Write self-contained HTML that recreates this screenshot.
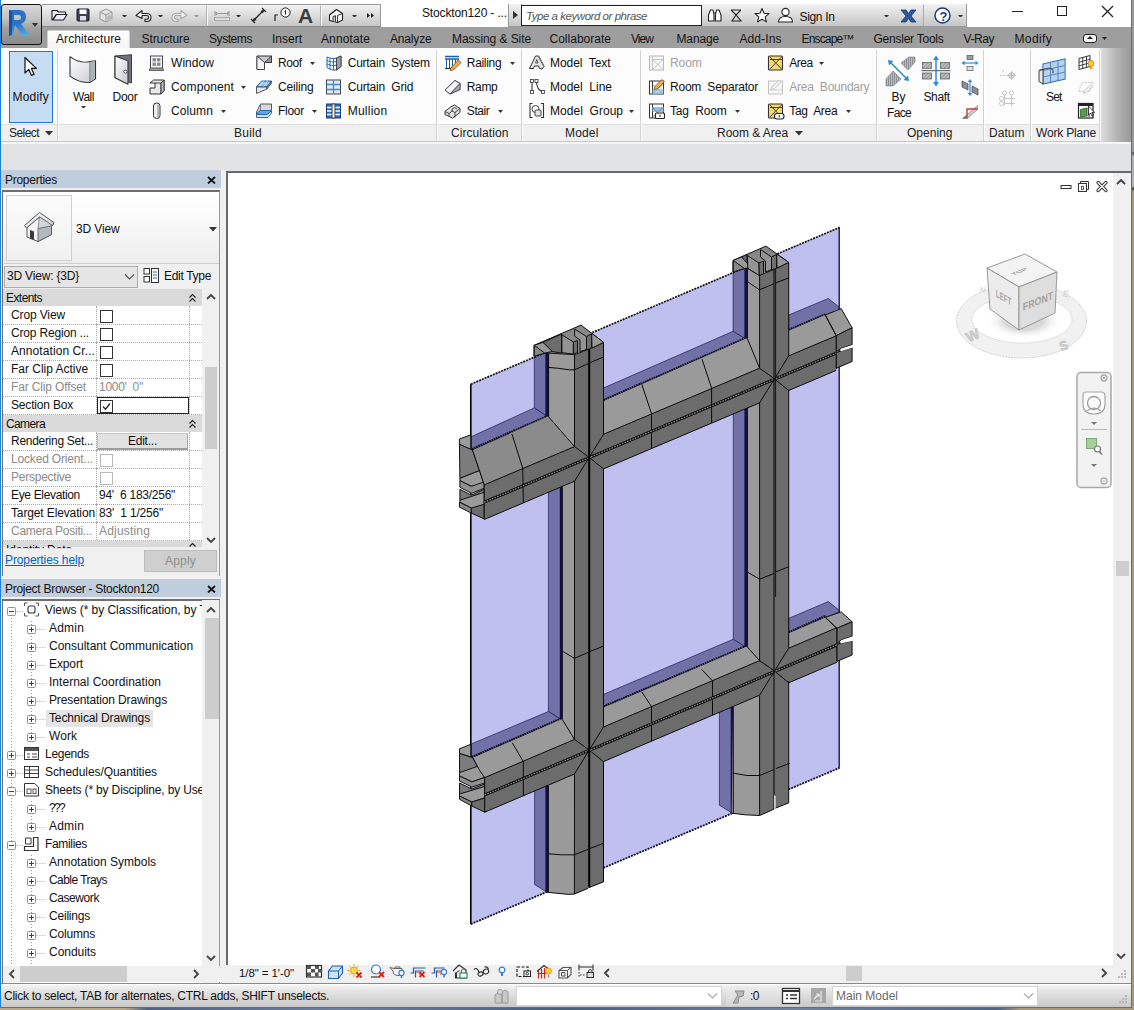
<!DOCTYPE html>
<html><head><meta charset="utf-8"><title>Stockton120</title>
<style>
html,body{margin:0;padding:0}
body{width:1134px;height:1010px;overflow:hidden;position:relative;background:#a6987c;font-family:"Liberation Sans",sans-serif;font-size:12px;color:#111}
#win{position:absolute;left:0;top:0;width:1132px;height:1008px;box-sizing:border-box;border:1px solid #1a82d8;border-top:none;background:#fff;overflow:hidden}
#in{position:absolute;left:-1px;top:0;width:1134px;height:1010px}
.t{position:absolute;white-space:pre;font-size:12px;line-height:14px;color:#111}
</style></head><body>
<div style="position:absolute;left:0;top:1008px;width:1134px;height:2px;background:linear-gradient(90deg,#b5a88a 0,#b5a88a 11%,#50627f 13%,#6d7f99 30%,#4a5d7c 50%,#71829b 70%,#506380 88%,#a6987c 90%)"></div>
<div style="position:absolute;left:1132px;top:0;width:2px;height:1008px;background:linear-gradient(#9a9a9a 0,#9a9a9a 15%,#555 15.2%,#b0b0b0 15.500%,#b0b0b0 18.500%,#444 18.700%,#a6987c 19%)"></div>
<div id="win"><div id="in">
<div style="position:absolute;left:1px;top:0px;width:1130px;height:27px;background:#fff"></div>
<div style="position:absolute;left:1px;top:4px;width:41px;height:41px;background:linear-gradient(#d8d8d8,#c2c2c2 35%,#a0a0a0 60%,#8a8a8a);border:1.5px solid #111;border-radius:3px;box-sizing:border-box;z-index:5"></div>
<svg style="position:absolute;left:8px;top:9px;z-index:6" width="24" height="28" viewBox="0 0 24 28"><defs><linearGradient id="rg" x1="0" y1="0" x2="0" y2="1"><stop offset="0" stop-color="#2a72c8"/><stop offset="0.55" stop-color="#2a72c8"/><stop offset="1" stop-color="#52b4e6"/></linearGradient></defs>
<path d="M1 1 H11 Q18 1 18 8 Q18 13 13 15 L22 27 H14 L7 16 L5 27 H1 Z M6 6 V11 H11 Q13 11 13 8.5 Q13 6 11 6 Z" fill="url(#rg)" fill-rule="evenodd"/><path d="M1 1 L4 3 L4 26 L1 27Z" fill="#1d4f9a"/></svg>
<div style="position:absolute;z-index:6;left:32px;top:23px;width:0;height:0;border-left:3.5px solid transparent;border-right:3.5px solid transparent;border-top:4.5px solid #2b3340"></div>
<div style="position:absolute;left:42px;top:4px;width:339px;height:23px;background:linear-gradient(#f2f2f2,#dcdcdc 50%,#c6c6c6);border-top:1px solid #9a9a9a;border-right:1px solid #9a9a9a;border-bottom:1px solid #8a8a8a;box-sizing:border-box"></div>
<svg style="position:absolute;left:0px;top:0px;z-index:4" width="400" height="28" viewBox="0 0 400 28"><path d="M52 10.5h5l1.5 1.5h7v2.5h-9l-3.5 5.5h-1z M52.5 20l3.5-5.5h11l-3.5 5.5z" fill="#eef" stroke="#222" stroke-width="1.1" stroke-linejoin="round"/><rect x="77" y="9" width="12" height="12" rx="1" fill="#3a4250" stroke="#1a2028" stroke-width="1"/><rect x="79.5" y="9.5" width="7" height="4.5" fill="#fff"/><rect x="80" y="16" width="6" height="4.5" fill="#dde"/><path d="M100 12l6-3 6 3v7l-6 3-6-3z M100 12l6 3 6-3 M106 15v7" fill="#e4e4e4" stroke="#9a9a9a" stroke-width="1"/><circle cx="110" cy="18" r="3" fill="#bbb"/><path d="M136 15.5l6-5v3h4.5c3 0 4.5 1.8 4.5 4s-1.500 4-4.500 4h-1.500v-2.200h1.500c1.500 0 2.200-.8 2.200-1.900s-.7-1.900-2.200-1.900h-4.500v3z" fill="#fff" stroke="#222" stroke-width="1.1" stroke-linejoin="round"/><path d="M187 15.5l-6-5v3h-4.500c-3 0-4.500 1.800-4.500 4s1.500 4 4.500 4h1.500v-2.200h-1.500c-1.500 0-2.200-.8-2.200-1.900s.7-1.900 2.200-1.900h4.500v3z" fill="#f4f4f4" stroke="#a8a8a8" stroke-width="1.1" stroke-linejoin="round"/><path d="M206.500 6v19" stroke="#b0b0b0"/><path d="M207.500 6v19" stroke="#fafafa"/><path d="M215 13.500h14 M215 11v5 M229 11v5 M217 12l-2 1.500 2 1.500 M227 12l2 1.500-2 1.500" fill="none" stroke="#999" stroke-width="1"/><rect x="214.500" y="17.500" width="15" height="3" fill="#ddd" stroke="#aaa"/><path d="M253 21l11-11 M251 19l4 4 M262 8l4 4 M255 19.500l-1.700 1.200 M262 11.500l2-1.500" fill="none" stroke="#222" stroke-width="1.300"/><path d="M253 21l1-3.500 2.500 2.500z M264 10l-1 3.500-2.500-2.500z" fill="#222"/><path d="M275 21v-6h3" fill="none" stroke="#222" stroke-width="1.200"/><path d="M281 10.500l3-2.500h3l3 2.500v4l-3 2.500h-3l-3-2.500z" fill="#fff" stroke="#222" stroke-width="1"/><path d="M285.500 10.500v4 M284.500 11.500l1-1" stroke="#222" stroke-width="1" fill="none"/><path d="M320.500 6v19" stroke="#b0b0b0"/><path d="M321.500 6v19" stroke="#fafafa"/><g transform="translate(-6.500 0)"><path d="M336 15l7-5.500 6 4v6.500l-5 2.500-8-2z" fill="#f6f6f6" stroke="#222" stroke-width="1.100" stroke-linejoin="round"/><path d="M339.500 21v-4.500l2.500-.8v6" fill="#ccc" stroke="#222" stroke-width=".9"/><path d="M343 9.500l-7 5.500 M344 22.500v-7l5-2" fill="none" stroke="#222" stroke-width=".9"/></g></svg>
<span class="t" style="left:298.0px;top:4.0px;color:#3c3c3c;font-size:21px;line-height:23px;font-weight:bold;z-index:4">A</span>
<svg style="position:absolute;left:121.5px;top:14.5625px;z-index:6" width="5" height="2.875" viewBox="0 0 5 2.875"><path d="M0 0h5l-2.5 2.875z" fill="#333"/></svg>
<svg style="position:absolute;left:157.5px;top:14.5625px;z-index:6" width="5" height="2.875" viewBox="0 0 5 2.875"><path d="M0 0h5l-2.5 2.875z" fill="#333"/></svg>
<svg style="position:absolute;left:193.5px;top:14.5625px;z-index:6" width="5" height="2.875" viewBox="0 0 5 2.875"><path d="M0 0h5l-2.5 2.875z" fill="#999"/></svg>
<svg style="position:absolute;left:235.5px;top:14.5625px;z-index:6" width="5" height="2.875" viewBox="0 0 5 2.875"><path d="M0 0h5l-2.5 2.875z" fill="#333"/></svg>
<svg style="position:absolute;left:352px;top:14.5625px;z-index:6" width="5" height="2.875" viewBox="0 0 5 2.875"><path d="M0 0h5l-2.5 2.875z" fill="#333"/></svg>
<svg style="position:absolute;left:366px;top:12px;z-index:4" width="10" height="8" viewBox="0 0 10 8"><path d="M1 1l3 2.500-3 2.500z M5 1l3 2.500-3 2.500z" fill="#222"/></svg>
<span class="t" style="left:422.0px;top:5.8px;letter-spacing:-0.14px;color:#111;">Stockton120 - ...</span>
<div style="position:absolute;left:508px;top:4px;width:459px;height:23px;background:linear-gradient(#f2f2f2,#dcdcdc 50%,#c6c6c6);border:1px solid #9a9a9a;border-top:none;box-sizing:border-box"></div>
<div style="position:absolute;left:508px;top:4px;width:14px;height:23px;border-right:1px solid #888;box-sizing:border-box"></div>
<div style="position:absolute;left:513px;top:11px;width:0;height:0;border-top:4px solid transparent;border-bottom:4px solid transparent;border-left:5px solid #333"></div>
<div style="position:absolute;left:521px;top:5px;width:181px;height:21px;background:#fff;border:1.500px solid #222;box-sizing:border-box"></div>
<span class="t" style="left:526.0px;top:9.6px;letter-spacing:-0.46px;color:#555;font-size:11.5px;line-height:13.5px;font-style:italic;">Type a keyword or phrase</span>
<svg style="position:absolute;left:0px;top:0px;z-index:4" width="1000" height="28" viewBox="0 0 1000 28"><path d="M708.500 21v-6l2-5h2.500l1 5v6z M715.500 21v-6l1-5h2.500l2 5v6z M713 13h3" fill="#fff" stroke="#222" stroke-width="1.100" stroke-linejoin="round"/><path d="M731 10l5 5 5-5 M731 10h10 M736 15l-4 6h9z" fill="none" stroke="#222" stroke-width="1.100"/><path d="M762 8.500l2 4.700 5 .4-3.800 3.300 1.200 5-4.400-2.700-4.400 2.700 1.200-5-3.800-3.300 5-.4z" fill="#fff" stroke="#222" stroke-width="1.100" stroke-linejoin="round"/><circle cx="785.500" cy="12" r="3.600" fill="#fff" stroke="#222" stroke-width="1.100"/><path d="M778.500 22c0-4 3-5.500 7-5.500s7 1.500 7 5.500z" fill="#fff" stroke="#222" stroke-width="1.100"/><path d="M901 10h5l2.500 3.500 2.500-3.500h5l-5 6 5 6h-5l-2.500-3.500-2.500 3.500h-5l5-6z" fill="#2a5a9a" stroke="#173a6a" stroke-width=".8"/><circle cx="942.500" cy="15.500" r="7.500" fill="#fff" stroke="#1a3a8a" stroke-width="1.500"/></svg>
<span class="t" style="left:939.5px;top:8.7px;color:#1a3a8a;font-size:13px;line-height:15px;font-weight:bold;z-index:5">?</span>
<span class="t" style="left:799.5px;top:9.8px;letter-spacing:-0.33px;color:#111;">Sign In</span>
<svg style="position:absolute;left:884px;top:14.5625px;z-index:6" width="5" height="2.875" viewBox="0 0 5 2.875"><path d="M0 0h5l-2.5 2.875z" fill="#333"/></svg>
<svg style="position:absolute;left:957.5px;top:14.5625px;z-index:6" width="5" height="2.875" viewBox="0 0 5 2.875"><path d="M0 0h5l-2.5 2.875z" fill="#333"/></svg>
<div style="position:absolute;left:923px;top:5px;width:1px;height:21px;background:#aaa"></div>
<div style="position:absolute;left:1012px;top:11px;width:11px;height:1.3px;background:#222"></div>
<div style="position:absolute;left:1056.5px;top:6px;width:10px;height:10px;border:1.300px solid #222;box-sizing:border-box"></div>
<svg style="position:absolute;left:1101px;top:5px;" width="13" height="13" viewBox="0 0 13 13"><path d="M1 1l11 11M12 1L1 12" stroke="#222" stroke-width="1.300"/></svg>
<div style="position:absolute;left:1px;top:27px;width:1130px;height:21px;background:#9e9e9e"></div>
<div style="position:absolute;left:47px;top:30px;width:83px;height:19px;background:linear-gradient(#fff,#f4f4f4);border:1px solid #d0d0d0;border-bottom:none;border-radius:2px 2px 0 0;box-sizing:border-box"></div>
<span class="t" style="left:56.0px;top:31.8px;letter-spacing:0.08px;color:#141414;">Architecture</span>
<span class="t" style="left:141.5px;top:31.8px;letter-spacing:-0.07px;color:#141414;">Structure</span>
<span class="t" style="left:209.0px;top:31.8px;letter-spacing:-0.43px;color:#141414;">Systems</span>
<span class="t" style="left:272.0px;top:31.8px;letter-spacing:0.00px;color:#141414;">Insert</span>
<span class="t" style="left:321.0px;top:31.8px;letter-spacing:0.12px;color:#141414;">Annotate</span>
<span class="t" style="left:390.0px;top:31.8px;letter-spacing:-0.17px;color:#141414;">Analyze</span>
<span class="t" style="left:452.0px;top:31.8px;letter-spacing:-0.07px;color:#141414;">Massing &amp; Site</span>
<span class="t" style="left:549.5px;top:31.8px;letter-spacing:0.01px;color:#141414;">Collaborate</span>
<span class="t" style="left:631.0px;top:31.8px;letter-spacing:-0.95px;color:#141414;">View</span>
<span class="t" style="left:676.5px;top:31.8px;letter-spacing:-0.14px;color:#141414;">Manage</span>
<span class="t" style="left:739.5px;top:31.8px;letter-spacing:0.09px;color:#141414;">Add-Ins</span>
<span class="t" style="left:801.5px;top:31.8px;letter-spacing:-0.84px;color:#141414;">Enscape™</span>
<span class="t" style="left:873.5px;top:31.8px;letter-spacing:-0.24px;color:#141414;">Gensler Tools</span>
<span class="t" style="left:963.5px;top:31.8px;letter-spacing:-0.44px;color:#141414;">V-Ray</span>
<span class="t" style="left:1014.5px;top:31.8px;letter-spacing:0.36px;color:#141414;">Modify</span>
<div style="position:absolute;left:1082.5px;top:33.5px;width:14px;height:9px;background:#f4f4f4;border:1px solid #222;border-radius:3px;box-sizing:border-box"></div>
<div style="position:absolute;left:1086.500px;top:36px;width:0;height:0;border-left:3px solid transparent;border-right:3px solid transparent;border-bottom:3.500px solid #222"></div>
<svg style="position:absolute;left:1102px;top:37.0625px;z-index:6" width="5" height="2.875" viewBox="0 0 5 2.875"><path d="M0 0h5l-2.5 2.875z" fill="#222"/></svg>
<div style="position:absolute;left:1px;top:48px;width:1130px;height:76px;background:#fcfcfc"></div>
<div style="position:absolute;left:1px;top:124px;width:1099px;height:17px;background:#f0f0f0;border-top:1px solid #dedede;box-sizing:border-box"></div>
<div style="position:absolute;left:1100px;top:48px;width:31px;height:94px;background:linear-gradient(90deg,#dedede,#b4b4b4 55%,#9c9c9c 95%)"></div>
<div style="position:absolute;left:1px;top:141px;width:1099px;height:1px;background:#c8c8c8"></div>
<div style="position:absolute;left:1px;top:142px;width:1130px;height:1.5px;background:#f6f6f6"></div>
<div style="position:absolute;left:1px;top:143.5px;width:1130px;height:27px;background:#e2e3e5"></div>
<div style="position:absolute;left:56.5px;top:50px;width:1px;height:91px;background:#d2d2d2"></div>
<div style="position:absolute;left:57.5px;top:50px;width:1px;height:91px;background:#fff"></div>
<div style="position:absolute;left:436px;top:50px;width:1px;height:91px;background:#d2d2d2"></div>
<div style="position:absolute;left:437px;top:50px;width:1px;height:91px;background:#fff"></div>
<div style="position:absolute;left:520.5px;top:50px;width:1px;height:91px;background:#d2d2d2"></div>
<div style="position:absolute;left:521.5px;top:50px;width:1px;height:91px;background:#fff"></div>
<div style="position:absolute;left:640px;top:50px;width:1px;height:91px;background:#d2d2d2"></div>
<div style="position:absolute;left:641px;top:50px;width:1px;height:91px;background:#fff"></div>
<div style="position:absolute;left:876px;top:50px;width:1px;height:91px;background:#d2d2d2"></div>
<div style="position:absolute;left:877px;top:50px;width:1px;height:91px;background:#fff"></div>
<div style="position:absolute;left:982.5px;top:50px;width:1px;height:91px;background:#d2d2d2"></div>
<div style="position:absolute;left:983.5px;top:50px;width:1px;height:91px;background:#fff"></div>
<div style="position:absolute;left:1029.5px;top:50px;width:1px;height:91px;background:#d2d2d2"></div>
<div style="position:absolute;left:1030.5px;top:50px;width:1px;height:91px;background:#fff"></div>
<div style="position:absolute;left:1098.5px;top:50px;width:1px;height:91px;background:#d2d2d2"></div>
<div style="position:absolute;left:1099.5px;top:50px;width:1px;height:91px;background:#fff"></div>
<div style="position:absolute;left:9px;top:50.5px;width:44px;height:72px;background:#c6dcf3;border:1.500px solid #1c78d2;box-sizing:border-box"></div>
<svg style="position:absolute;left:22px;top:56px;" width="16" height="22" viewBox="0 0 16 22"><path d="M3 1.500v15.500l3.800-3.600 2.700 6 2.600-1.200-2.700-5.800h5z" fill="#fff" stroke="#111" stroke-width="1.200" stroke-linejoin="round"/></svg>
<span class="t" style="left:12.5px;top:89.8px;letter-spacing:0.19px;color:#111;">Modify</span>
<svg style="position:absolute;left:67px;top:53.5px;" width="32" height="32" viewBox="0 0 32 36" preserveAspectRatio="none"><defs><linearGradient id="wg" x1="0" y1="0" x2="1" y2="1"><stop offset="0" stop-color="#fff"/><stop offset="1" stop-color="#c9ccd3"/></linearGradient></defs><path d="M3 3 C10 9 17 10 23 8.500 L28.500 7.500 V28 L23 32 C15 33 9 30 3 25 Z" fill="url(#wg)" stroke="#333" stroke-width="1.100" stroke-linejoin="round"/><path d="M23 8.500V32" stroke="#555" stroke-width="1" fill="none"/><path d="M23.500 9L28 8v19.500l-4.500 3.500z" fill="#aeb2bb"/></svg>
<span class="t" style="left:73.0px;top:89.8px;letter-spacing:-0.48px;color:#111;">Wall</span>
<svg style="position:absolute;left:80.5px;top:105.562px;z-index:6" width="5" height="2.875" viewBox="0 0 5 2.875"><path d="M0 0h5l-2.5 2.875z" fill="#333"/></svg>
<svg style="position:absolute;left:112px;top:52.5px;" width="24" height="33" viewBox="0 0 24 38" preserveAspectRatio="none"><defs><linearGradient id="dg" x1="0" y1="0" x2="1" y2="1"><stop offset="0" stop-color="#fff"/><stop offset="1" stop-color="#c4c7cf"/></linearGradient></defs><path d="M3 3.500L19.500 2V34.500L3 28.500Z" fill="#6f737d" stroke="#333" stroke-width="1"/><path d="M3 3.500L16 9V36L3 28.500Z" fill="url(#dg)" stroke="#333" stroke-width="1.100" stroke-linejoin="round"/><circle cx="13.500" cy="21.500" r="1.700" fill="#fff" stroke="#333" stroke-width=".9"/></svg>
<span class="t" style="left:112.5px;top:89.8px;letter-spacing:-0.25px;color:#111;">Door</span>
<span class="t" style="left:171.0px;top:56.1px;letter-spacing:0.05px;color:#111;">Window</span>
<span class="t" style="left:171.0px;top:80.1px;letter-spacing:0.11px;color:#111;">Component</span>
<svg style="position:absolute;left:241.2px;top:85.8625px;z-index:6" width="5" height="2.875" viewBox="0 0 5 2.875"><path d="M0 0h5l-2.5 2.875z" fill="#333"/></svg>
<span class="t" style="left:171.0px;top:103.9px;letter-spacing:0.11px;color:#111;">Column</span>
<svg style="position:absolute;left:220.5px;top:109.662px;z-index:6" width="5" height="2.875" viewBox="0 0 5 2.875"><path d="M0 0h5l-2.5 2.875z" fill="#333"/></svg>
<span class="t" style="left:278.0px;top:56.1px;letter-spacing:-0.46px;color:#111;">Roof</span>
<svg style="position:absolute;left:309.5px;top:61.8625px;z-index:6" width="5" height="2.875" viewBox="0 0 5 2.875"><path d="M0 0h5l-2.5 2.875z" fill="#333"/></svg>
<span class="t" style="left:278.0px;top:80.1px;letter-spacing:-0.16px;color:#111;">Ceiling</span>
<span class="t" style="left:278.0px;top:103.9px;letter-spacing:-0.27px;color:#111;">Floor</span>
<svg style="position:absolute;left:311.5px;top:109.662px;z-index:6" width="5" height="2.875" viewBox="0 0 5 2.875"><path d="M0 0h5l-2.5 2.875z" fill="#333"/></svg>
<span class="t" style="left:347.7px;top:56.1px;letter-spacing:-0.22px;color:#111;">Curtain  System</span>
<span class="t" style="left:347.7px;top:80.1px;letter-spacing:-0.19px;color:#111;">Curtain  Grid</span>
<span class="t" style="left:347.7px;top:103.9px;letter-spacing:0.24px;color:#111;">Mullion</span>
<span class="t" style="left:466.8px;top:56.1px;letter-spacing:-0.31px;color:#111;">Railing</span>
<svg style="position:absolute;left:510px;top:61.8625px;z-index:6" width="5" height="2.875" viewBox="0 0 5 2.875"><path d="M0 0h5l-2.5 2.875z" fill="#333"/></svg>
<span class="t" style="left:466.8px;top:80.1px;letter-spacing:-0.38px;color:#111;">Ramp</span>
<span class="t" style="left:466.8px;top:103.9px;letter-spacing:-0.41px;color:#111;">Stair</span>
<svg style="position:absolute;left:497.5px;top:109.662px;z-index:6" width="5" height="2.875" viewBox="0 0 5 2.875"><path d="M0 0h5l-2.5 2.875z" fill="#333"/></svg>
<span class="t" style="left:550.0px;top:56.1px;letter-spacing:-0.05px;color:#111;">Model  Text</span>
<span class="t" style="left:550.0px;top:80.1px;letter-spacing:-0.00px;color:#111;">Model  Line</span>
<span class="t" style="left:550.0px;top:103.9px;letter-spacing:0.03px;color:#111;">Model  Group</span>
<svg style="position:absolute;left:628.5px;top:109.662px;z-index:6" width="5" height="2.875" viewBox="0 0 5 2.875"><path d="M0 0h5l-2.5 2.875z" fill="#333"/></svg>
<span class="t" style="left:670.0px;top:56.1px;letter-spacing:-0.08px;color:#a0a0a0;">Room</span>
<span class="t" style="left:670.0px;top:80.1px;letter-spacing:-0.22px;color:#111;">Room  Separator</span>
<span class="t" style="left:670.0px;top:103.9px;letter-spacing:-0.17px;color:#111;">Tag  Room</span>
<svg style="position:absolute;left:735.2px;top:109.662px;z-index:6" width="5" height="2.875" viewBox="0 0 5 2.875"><path d="M0 0h5l-2.5 2.875z" fill="#333"/></svg>
<span class="t" style="left:789.3px;top:56.1px;letter-spacing:-0.51px;color:#111;">Area</span>
<svg style="position:absolute;left:819.2px;top:61.8625px;z-index:6" width="5" height="2.875" viewBox="0 0 5 2.875"><path d="M0 0h5l-2.5 2.875z" fill="#333"/></svg>
<span class="t" style="left:789.3px;top:80.1px;letter-spacing:-0.24px;color:#a0a0a0;">Area  Boundary</span>
<span class="t" style="left:789.3px;top:103.9px;letter-spacing:-0.30px;color:#111;">Tag  Area</span>
<svg style="position:absolute;left:846px;top:109.662px;z-index:6" width="5" height="2.875" viewBox="0 0 5 2.875"><path d="M0 0h5l-2.5 2.875z" fill="#333"/></svg>
<span class="t" style="left:891.5px;top:89.8px;letter-spacing:0.00px;color:#111;">By</span>
<span class="t" style="left:887.0px;top:105.8px;letter-spacing:-0.67px;color:#111;">Face</span>
<span class="t" style="left:923.4px;top:89.8px;letter-spacing:-0.34px;color:#111;">Shaft</span>
<span class="t" style="left:1046.0px;top:89.8px;letter-spacing:-0.83px;color:#111;">Set</span>
<span class="t" style="left:9.0px;top:126.1px;letter-spacing:-0.56px;color:#222;">Select</span>
<span class="t" style="left:234.0px;top:126.1px;letter-spacing:0.26px;color:#222;">Build</span>
<span class="t" style="left:451.0px;top:126.1px;letter-spacing:0.07px;color:#222;">Circulation</span>
<span class="t" style="left:565.0px;top:126.1px;letter-spacing:0.16px;color:#222;">Model</span>
<span class="t" style="left:717.0px;top:126.1px;letter-spacing:-0.03px;color:#222;">Room &amp; Area</span>
<span class="t" style="left:907.0px;top:126.1px;letter-spacing:0.02px;color:#222;">Opening</span>
<span class="t" style="left:989.0px;top:126.1px;letter-spacing:0.03px;color:#222;">Datum</span>
<span class="t" style="left:1036.0px;top:126.1px;letter-spacing:-0.18px;color:#222;">Work Plane</span>
<svg style="position:absolute;left:45px;top:131px;z-index:6" width="8" height="4.6" viewBox="0 0 8 4.6"><path d="M0 0h8l-4 4.6z" fill="#333"/></svg>
<svg style="position:absolute;left:794.5px;top:131px;z-index:6" width="8" height="4.6" viewBox="0 0 8 4.6"><path d="M0 0h8l-4 4.6z" fill="#333"/></svg>
<svg style="position:absolute;left:0;top:0" width="1134" height="150" viewBox="0 0 1134 150"><g transform="translate(149 55.5)"><rect x="1.500" y="0.500" width="12" height="12" fill="#fff" stroke="#444"/><rect x="3.500" y="2.500" width="3.500" height="3.500" fill="#8a8d94"/><rect x="8" y="2.500" width="3.500" height="3.500" fill="#8a8d94"/><rect x="3.500" y="7" width="3.500" height="3.500" fill="#8a8d94"/><rect x="8" y="7" width="3.500" height="3.500" fill="#8a8d94"/><rect x="0.500" y="13.500" width="14" height="1.500" fill="#ddd" stroke="#444" stroke-width=".8"/></g><g transform="translate(148.5 78.5)"><path d="M1.500 4.500L5 1.500h10.500v10.500l-3 3.500H1.500V9.500h5v-5z" fill="#e8e8ea" stroke="#333" stroke-linejoin="round"/><path d="M6.500 4.500h6v11M12.500 4.500l3-3M6.500 9.500h0" fill="none" stroke="#333" stroke-width=".9"/><path d="M12.500 4.500l3-3v10.500l-3 3.500z" fill="#b8bac0" stroke="#333" stroke-width=".9"/></g><g transform="translate(152.5 102.5)"><rect x="1" y="0.500" width="6.500" height="15.500" rx="3" fill="#f0f0f2" stroke="#333"/><path d="M5.500 2v12.500" stroke="#aaa" stroke-width="1.500"/></g><g transform="translate(256.5 55.5)"><path d="M0.500 0.500h14.500v6.500h-7v7h-7.500z" fill="#c9cbd0" stroke="#333" stroke-linejoin="round"/><path d="M0.500 0.500l7.500 6.500M8 7h7M8 7v7" fill="none" stroke="#555" stroke-width=".9"/><path d="M0.500 0.500l7.500 6.500v7h-7.500z" fill="#f4f4f6" stroke="#333" stroke-width=".8"/><path d="M8 7h7V0.500z" fill="#8f9299" stroke="#333" stroke-width=".8"/></g><g transform="translate(255.5 78.5)"><path d="M1 8.500L6 2.500h10l-4.500 6z" fill="#5fa5ea" stroke="#1b5fae" stroke-width=".9"/><path d="M3 6.500h10M4.500 4.500h10M8 2.500l-4 6M12 2.500l-4 6" stroke="#dff" stroke-width=".7"/><path d="M1 8.500v6.500l10.500-4.500v-2z" fill="#e4e4e6" stroke="#444" stroke-width=".9"/><path d="M11.500 8.500L16 2.500v2l-4.500 6z" fill="#999" stroke="#444" stroke-width=".8"/></g><g transform="translate(255.5 102.5)"><path d="M1 9.500L5 1.500h11v6.500l-4 6h-11z" fill="#d8d9dc" stroke="#444" stroke-width=".9" stroke-linejoin="round"/><path d="M5 1.500v6L1 13" fill="none" stroke="#666" stroke-width=".8"/><path d="M1 11.500L4.500 8h11.500l-4 4.500z" fill="#5fa5ea" stroke="#1b5fae" stroke-width=".9"/><path d="M1 12v3h11.500l3.500-4.500v-2.500l-4 4z" fill="#cfe3fa" stroke="#1b5fae" stroke-width=".9"/></g><g transform="translate(326 54.5)"><path d="M1 2.500C4 4 7 4.500 10.500 3.500L15 1.500v10.500l-4.500 3.500C7 16 4 15 1 13z" fill="#fff" stroke="#1b5fae" stroke-width="1"/><path d="M1 6c3 1.500 6 2 9.500 1l4.500-2M1 9.500c3 1.500 6 2 9.500 1l4.500-2M4 4v11M7.500 4.500v11M10.500 3.500v12" fill="none" stroke="#1b5fae" stroke-width=".9"/><path d="M10.500 3.500L15 1.500v10.500l-4.500 3.500z" fill="#9a9da4" stroke="#333" stroke-width=".8"/></g><g transform="translate(326 79.5)"><rect x="0.500" y="0.500" width="14" height="14" fill="#e8e8ec" stroke="#444"/><path d="M0.500 5h14M0.500 10h14M7.500 0.500v14" stroke="#3b8be0" stroke-width="1.300"/></g><g transform="translate(326 103.5)"><rect x="0.500" y="0.500" width="14" height="14" fill="#2d6fc4" stroke="#1a3f7a"/><path d="M1 4h5M9 4h5M1 7.500h5M9 7.500h5M1 11h5M9 11h5" stroke="#fff" stroke-width="1.300"/><rect x="6" y="0.500" width="3" height="14" fill="#e8e8ea" stroke="#333" stroke-width=".8"/></g><g transform="translate(444.5 55.5)"><path d="M0.500 1h14M0.500 3.500h14" stroke="#1b5fae" stroke-width="1.300"/><path d="M2 3.500v9M5 3.500v9M8 3.500v9M11 3.500v6M13.500 3.500v3" stroke="#1b5fae" stroke-width="1"/><path d="M0.500 13h7" stroke="#333" stroke-width="1.200"/><path d="M6 15l1-3.500 7-7 2.500 2.500-7 7z" fill="#f2b04a" stroke="#7a4a10" stroke-width=".8"/><path d="M6 15l1-3.500 2.500 2.500z" fill="#f7e0c0" stroke="#7a4a10" stroke-width=".6"/></g><g transform="translate(444.5 79.5)"><path d="M0.500 10.500L10.500 1l5 3v6l-10 4.500z" fill="#e6e6e8" stroke="#444" stroke-width=".9" stroke-linejoin="round"/><path d="M0.500 10.500l10-4.500 5-2M10.500 6v8" fill="none" stroke="#444" stroke-width=".0"/><path d="M0.500 10.500L10.500 1l5 3L5.500 14.500z" fill="#f6f6f8" stroke="#444" stroke-width=".9" stroke-linejoin="round"/><path d="M15.500 4v6l-10 4.500z" fill="#a6a8ae" stroke="#444" stroke-width=".8"/></g><g transform="translate(444.5 103.5)"><path d="M0.500 8L6 3.500l4-2 5.500 3.500v4L8 14.500 0.500 11z" fill="#e2e2e5" stroke="#333" stroke-width="1" stroke-linejoin="round"/><path d="M0.500 8l4 2 3-2.500 3 1.500 5-4M4.500 10v2.500M7.500 7.500V5.500l2.500-1.500 2.500 1.500M10.500 9v5" fill="none" stroke="#333" stroke-width=".9"/></g><g transform="translate(528.5 54.5)"><path d="M1 14L7 1.500h3L15.500 12l-2 2.500-2.500-.5-1-2.500H6L5 14z" fill="#e4e4e6" stroke="#333" stroke-width="1" stroke-linejoin="round"/><path d="M7 8.500h2.500L8.300 5z" fill="#fff" stroke="#333" stroke-width=".8"/><path d="M10 1.500L15.500 12" stroke="#777" stroke-width="1.500"/></g><g transform="translate(528.5 78.5)"><path d="M3.500 2.500v11" stroke="#333" stroke-width="1.100"/><path d="M8 2.500c0 7 2 10 7 11" fill="none" stroke="#333" stroke-width="1.100"/><rect x="2" y="1" width="3" height="3" fill="#fff" stroke="#333" stroke-width=".8"/><rect x="2" y="12" width="3" height="3" fill="#fff" stroke="#333" stroke-width=".8"/><rect x="6.500" y="1" width="3" height="3" fill="#fff" stroke="#333" stroke-width=".8"/><rect x="13" y="12" width="3" height="3" fill="#fff" stroke="#333" stroke-width=".8"/></g><g transform="translate(528.5 102.5)"><path d="M4 1H1.500v14H4M12.500 1H15v14h-2.500" fill="none" stroke="#333" stroke-width="1.100"/><circle cx="7" cy="6.500" r="3.500" fill="#fff" stroke="#333" stroke-width=".9"/><rect x="6.500" y="7.500" width="6" height="6" rx="1" fill="#e4e4e6" stroke="#333" stroke-width=".9"/></g><g transform="translate(649 55.5)"><rect x="0.500" y="0.500" width="14" height="14" fill="#f6f6f6" stroke="#b8b8b8"/><path d="M3.500 0.500v14M3.500 4l10.500 10M14 4L3.500 14M3.500 4h11" fill="none" stroke="#c0c0c0" stroke-width=".9"/></g><g transform="translate(649 79.5)"><rect x="0.500" y="1.500" width="14" height="13" fill="#fff" stroke="#333"/><path d="M3.500 1.500v13" stroke="#333"/><path d="M3.500 5l10.500 9M14 5L3.500 14" stroke="#777" stroke-width=".8"/><path d="M3.500 9.500h11v5h-11z" fill="#8ec0ee" opacity=".8"/><path d="M5 10l1-3 7-7 2.300 2.300-7 7z" fill="#f2b04a" stroke="#7a4a10" stroke-width=".8"/></g><g transform="translate(649 103.5)"><rect x="0.500" y="0.500" width="14" height="14" fill="#fff" stroke="#333"/><path d="M3.500 0.500v14" stroke="#333"/><path d="M3.500 3.500h11v5h-11z" fill="#8ec0ee"/><path d="M3.500 4l10.500 10M14 4L3.500 14" stroke="#777" stroke-width=".8"/><rect x="6.500" y="9.500" width="9" height="5.500" rx="1" fill="#fff" stroke="#222" stroke-width="1.100"/><path d="M11 11v2.500" stroke="#222"/></g><g transform="translate(768 55.5)"><rect x="0.500" y="0.500" width="14" height="14" rx="1" fill="#f3d872" stroke="#333" stroke-width="1.100"/><path d="M2 1.500l11.500 12M13.500 1.500L2 13.500M2 4h12" fill="none" stroke="#333" stroke-width=".9"/></g><g transform="translate(768 79.5)"><rect x="0.500" y="1.500" width="14" height="13" fill="#f6f6f6" stroke="#c4c4c4"/><path d="M0.500 10.500h14" stroke="#d0d0d0"/><path d="M3 10l1-3 7-6.500 2.300 2.300-7 6.500z" fill="#eee" stroke="#c0c0c0" stroke-width=".8"/></g><g transform="translate(768 103.5)"><rect x="0.500" y="0.500" width="14" height="14" rx="1" fill="#f3d872" stroke="#333" stroke-width="1.100"/><path d="M2 1.500l11.500 12M13.500 1.500L2 13.500M2 4h12" fill="none" stroke="#333" stroke-width=".9"/><rect x="6.500" y="10" width="9.500" height="5.500" rx="2.500" fill="#fff" stroke="#222" stroke-width="1.100"/><path d="M11.200 11.500v2.500" stroke="#222"/></g><g transform="translate(884 55)"><defs><pattern id="hv" width="2" height="2" patternUnits="userSpaceOnUse"><rect width="2" height="2" fill="#b9bbc0"/><rect width="1" height="2" fill="#8d9097"/></pattern></defs><path d="M17 8l8-6h6v5l-7 8z" fill="url(#hv)" stroke="#777" stroke-width=".6"/><path d="M2 24l7-8 8 8-8 7H2z" fill="url(#hv)" stroke="#777" stroke-width=".6"/><path d="M5 6l19 19" stroke="#2a8be6" stroke-width="1.600"/><path d="M4 5l5.500 1-4.500 4.500zM25 26l-5.500-1 4.500-4.500z" fill="#2a8be6"/></g><g transform="translate(921 55)"><defs><pattern id="hd" width="2.500" height="2.500" patternUnits="userSpaceOnUse" patternTransform="rotate(45)"><rect width="2.500" height="2.500" fill="#c9cbd0"/><rect width="1.200" height="2.500" fill="#8d9097"/></pattern></defs><rect x="1.500" y="7.500" width="9" height="6" fill="url(#hd)" stroke="#666" stroke-width=".8"/><rect x="19.500" y="7.500" width="9" height="6" fill="url(#hd)" stroke="#666" stroke-width=".8"/><rect x="1.500" y="18" width="9" height="6" fill="url(#hd)" stroke="#666" stroke-width=".8"/><rect x="19.500" y="18" width="9" height="6" fill="url(#hd)" stroke="#666" stroke-width=".8"/><path d="M0.500 15.700h29" stroke="#444" stroke-width="1"/><path d="M15 3v26" stroke="#2a8be6" stroke-width="1.500"/><path d="M15 0.500l3 4.500h-6zM15 31.500l3-4.500h-6z" fill="#2a8be6"/></g><g transform="translate(961.5 55)"><rect x="5.500" y="0.500" width="6" height="4" fill="#9a9da4" stroke="#555" stroke-width=".7"/><rect x="5.500" y="11.500" width="6" height="4" fill="#e0e0e2" stroke="#555" stroke-width=".7"/><path d="M2 8h13" stroke="#2a8be6" stroke-width="1.200"/><path d="M0 8l3-2.300v4.600zM17 8l-3-2.300v4.600z" fill="#2a8be6"/></g><g transform="translate(961.5 79)"><path d="M0.500 2l6 3v6l-6-3zM10.500 7l6 3v6l-6-3z" fill="#8d9097" stroke="#444" stroke-width=".7"/><path d="M8.500 2.500v12" stroke="#2a8be6" stroke-width="1.200"/><path d="M8.500 0l2.300 3h-4.600zM8.500 17l2.300-3h-4.600z" fill="#2a8be6"/></g><g transform="translate(961.5 103)"><path d="M1 15.500L16 2.500v4L6 15.500z" fill="#c9cbd0" stroke="#777" stroke-width=".6"/><path d="M5.500 15.500v-9.500h10.500" fill="none" stroke="#d03a2a" stroke-width="1.400"/><path d="M1 15.500l4.500-4v4z" fill="#777"/></g><g transform="translate(999 66)"><path d="M1 9.500h8" stroke="#c8c8c8" stroke-dasharray="2 1"/><circle cx="12.500" cy="9.500" r="3" fill="#d4d4d4" stroke="#c0c0c0"/><path d="M8 9.500h9M12.500 5v9" stroke="#c0c0c0" stroke-width=".9"/><path d="M4 3.500v3" stroke="#c8c8c8"/></g><g transform="translate(999 90)"><path d="M5.500 4v12M12.500 4v12M2 8.500h14M2 13.500h14" stroke="#c4c4c4" stroke-width="1"/><circle cx="5.500" cy="3" r="2" fill="#fff" stroke="#c4c4c4"/><circle cx="12.500" cy="3" r="2" fill="#fff" stroke="#c4c4c4"/><circle cx="2.500" cy="8.500" r="2" fill="#fff" stroke="#c4c4c4"/><circle cx="2.500" cy="13.500" r="2" fill="#fff" stroke="#c4c4c4"/></g><g transform="translate(1038 55)"><path d="M5 9l22-5v20L5 29z" fill="#9cc4e8" stroke="#1b5fae" stroke-width="1.100"/><path d="M5 15.500l22-5M5 22l22-5M12.500 7.300v20M20 5.600v20" stroke="#1b5fae" stroke-width="1"/><path d="M5 9l22-5v20L5 29z" fill="#fff" opacity=".25"/><path d="M1 15.500l4-1.500v15l-4-2.500z" fill="#e8e8ea" stroke="#333" stroke-width=".9"/><path d="M1 15.500l10-2.500 4 1.500v4" fill="none" stroke="#333" stroke-width=".9"/></g><g transform="translate(1077.5 54.5)"><path d="M1.500 4l11-3v11l-11 3z" fill="#fff" stroke="#333" stroke-width="1"/><path d="M1.500 7.700l11-3M1.500 11.300l11-3M5.200 3v11M9 2v11" stroke="#333" stroke-width=".9"/><circle cx="13.500" cy="9" r="3" fill="#ffc83a" stroke="#c98a10" stroke-width=".8"/><rect x="12.200" y="12" width="2.600" height="2.500" fill="#e8a020"/></g><g transform="translate(1077.5 79)"><path d="M1 12.500L5 3.500h11l-4 9z" fill="none" stroke="#c8c8c8" stroke-dasharray="2 1"/><path d="M6 14.500l1-3 6.500-6 2 2-6.500 6z" fill="#f0f0f0" stroke="#c0c0c0" stroke-width=".8"/></g><g transform="translate(1077.5 102.5)"><rect x="1" y="1" width="14.500" height="14.500" fill="#fff" stroke="#222" stroke-width="1.200"/><path d="M1 2.500h14.500" stroke="#222" stroke-width="2"/><path d="M3 7l6-1.500v8L3 14.500z" fill="#5d9a4e" stroke="#2f5f28" stroke-width=".8"/><path d="M9 5.500l3 1v7.500l-3-.5z" fill="#8dc47e" stroke="#2f5f28" stroke-width=".6"/><path d="M11 3.500v9l2-2 1.500 3 1.300-.6-1.500-3h2.700z" fill="#fff" stroke="#111" stroke-width=".8"/></g></svg>
<div style="position:absolute;left:1px;top:170px;width:224.5px;height:814px;background:#f0f0f0"></div>
<div style="position:absolute;left:1px;top:170px;width:220px;height:17.8px;background:#bfcddc"></div>
<span class="t" style="left:5.0px;top:173.3px;letter-spacing:-0.27px;color:#111;">Properties</span>
<svg style="position:absolute;left:206.5px;top:175.5px;" width="9" height="8" viewBox="0 0 9 8"><path d="M1 1l7 6.500M8 1L1 7.500" stroke="#111" stroke-width="1.800"/></svg>
<div style="position:absolute;left:2px;top:190px;width:218px;height:387px;background:#f0f0f0;border:1px solid #9a9a9a;border-top:2px solid #6e6e6e;border-left:1.500px solid #6e6e6e;border-bottom:none;box-sizing:border-box"></div>
<div style="position:absolute;left:3.5px;top:191.5px;width:215px;height:72px;background:linear-gradient(#fff,#fafafa 40%,#ececec);border-bottom:1px solid #d0d0d0;box-sizing:border-box"></div>
<div style="position:absolute;left:6px;top:195px;width:66px;height:66px;background:linear-gradient(#fbfbfb,#f1f1f1);border:1px solid #cfcfcf;box-sizing:border-box"></div>
<svg style="position:absolute;left:24px;top:212px;" width="31" height="31" viewBox="0 0 31 31"><defs><linearGradient id="hg" x1="0" y1="0" x2="1" y2="1"><stop offset="0" stop-color="#fff"/><stop offset="1" stop-color="#c8ccd4"/></linearGradient></defs><path d="M3 15L15 5.500l12.500 8v9L14 29.500 3 25z" fill="#f4f4f6" stroke="#555" stroke-width="1"/><path d="M14 16.500l13.500-3v9L14 29.500z" fill="#b4b8c0" stroke="#555" stroke-width=".8"/><path d="M6 18l4 1.500v8.500l-4-1.500z" fill="#3a3a3a"/><path d="M0.500 13.500L15.500 0.500 30 10.500l-1.500 3L15.500 5 2.500 16z" fill="url(#hg)" stroke="#555" stroke-width="1" stroke-linejoin="round"/><path d="M15.500 5L14 16.500l14.500-3z" fill="#d4d7dd" stroke="#666" stroke-width=".7"/></svg>
<span class="t" style="left:76.0px;top:222.3px;letter-spacing:-0.14px;color:#111;">3D View</span>
<svg style="position:absolute;left:209px;top:227px;" width="8" height="5" viewBox="0 0 8 5"><path d="M0 0h8l-4 4.500z" fill="#333"/></svg>
<div style="position:absolute;left:3.5px;top:265.5px;width:134px;height:22px;background:#e5e5e5;border:1px solid #adadad;box-sizing:border-box"></div>
<span class="t" style="left:7.0px;top:269.3px;letter-spacing:-0.19px;color:#111;">3D View: {3D}</span>
<svg style="position:absolute;left:123.5px;top:273px;" width="11" height="8" viewBox="0 0 11 8"><path d="M1 1.500l4.500 4.500L10 1.500" fill="none" stroke="#555" stroke-width="1.100"/></svg>
<svg style="position:absolute;left:143px;top:267px;" width="17" height="17" viewBox="0 0 17 17"><rect x="1" y="1.500" width="5.500" height="5.500" fill="#fff" stroke="#333"/><rect x="1" y="9.500" width="5.500" height="5.500" fill="#fff" stroke="#333"/><rect x="8.500" y="1.500" width="7" height="14" fill="#fff" stroke="#333"/><path d="M10 5h4M10 8h4M10 11h4" stroke="#36a" stroke-width="1"/></svg>
<span class="t" style="left:164.0px;top:268.8px;letter-spacing:-0.31px;color:#111;">Edit Type</span>
<div style="position:absolute;left:3px;top:289px;width:199px;height:257px;background:#fff;overflow:hidden"></div>
<div style="position:absolute;left:3px;top:289px;width:199px;height:17px;background:#dadada"></div>
<span class="t" style="left:6.0px;top:291.3px;letter-spacing:-0.57px;color:#111;">Extents</span>
<svg style="position:absolute;left:188px;top:293px;" width="9" height="10" viewBox="0 0 9 10"><path d="M1.500 4.500l3-3 3 3M1.500 8.500l3-3 3 3" fill="none" stroke="#222" stroke-width="1.200"/></svg>
<span class="t" style="left:11.0px;top:308.0px;letter-spacing:-0.13px;color:#111;">Crop View</span>
<div style="position:absolute;left:3px;top:323.5px;width:199px;height:0px;border-top:1px dotted #a8a8a8"></div>
<div style="position:absolute;left:96px;top:306px;width:0px;height:18px;border-left:1px dotted #a8a8a8"></div>
<div style="position:absolute;left:188.5px;top:306px;width:0px;height:18px;border-left:1px dotted #a8a8a8"></div>
<span class="t" style="left:11.0px;top:326.0px;letter-spacing:-0.18px;color:#111;">Crop Region ...</span>
<div style="position:absolute;left:3px;top:341.5px;width:199px;height:0px;border-top:1px dotted #a8a8a8"></div>
<div style="position:absolute;left:96px;top:324px;width:0px;height:18px;border-left:1px dotted #a8a8a8"></div>
<div style="position:absolute;left:188.5px;top:324px;width:0px;height:18px;border-left:1px dotted #a8a8a8"></div>
<span class="t" style="left:11.0px;top:344.0px;letter-spacing:0.08px;color:#111;">Annotation Cr...</span>
<div style="position:absolute;left:3px;top:359.5px;width:199px;height:0px;border-top:1px dotted #a8a8a8"></div>
<div style="position:absolute;left:96px;top:342px;width:0px;height:18px;border-left:1px dotted #a8a8a8"></div>
<div style="position:absolute;left:188.5px;top:342px;width:0px;height:18px;border-left:1px dotted #a8a8a8"></div>
<span class="t" style="left:11.0px;top:362.0px;letter-spacing:-0.02px;color:#111;">Far Clip Active</span>
<div style="position:absolute;left:3px;top:377.5px;width:199px;height:0px;border-top:1px dotted #a8a8a8"></div>
<div style="position:absolute;left:96px;top:360px;width:0px;height:18px;border-left:1px dotted #a8a8a8"></div>
<div style="position:absolute;left:188.5px;top:360px;width:0px;height:18px;border-left:1px dotted #a8a8a8"></div>
<span class="t" style="left:11.0px;top:380.0px;letter-spacing:-0.14px;color:#8a8a8a;">Far Clip Offset</span>
<div style="position:absolute;left:3px;top:395.5px;width:199px;height:0px;border-top:1px dotted #a8a8a8"></div>
<div style="position:absolute;left:96px;top:378px;width:0px;height:18px;border-left:1px dotted #a8a8a8"></div>
<div style="position:absolute;left:188.5px;top:378px;width:0px;height:18px;border-left:1px dotted #a8a8a8"></div>
<span class="t" style="left:11.0px;top:398.0px;letter-spacing:-0.18px;color:#111;">Section Box</span>
<div style="position:absolute;left:3px;top:413.5px;width:199px;height:0px;border-top:1px dotted #a8a8a8"></div>
<div style="position:absolute;left:96px;top:396px;width:0px;height:18px;border-left:1px dotted #a8a8a8"></div>
<div style="position:absolute;left:188.5px;top:396px;width:0px;height:18px;border-left:1px dotted #a8a8a8"></div>
<div style="position:absolute;left:100px;top:309.5px;width:13px;height:13px;border:1px solid #333;background:#fff;box-sizing:border-box"></div>
<div style="position:absolute;left:100px;top:327.5px;width:13px;height:13px;border:1px solid #333;background:#fff;box-sizing:border-box"></div>
<div style="position:absolute;left:100px;top:345.5px;width:13px;height:13px;border:1px solid #333;background:#fff;box-sizing:border-box"></div>
<div style="position:absolute;left:100px;top:363.5px;width:13px;height:13px;border:1px solid #333;background:#fff;box-sizing:border-box"></div>
<span class="t" style="left:99.0px;top:380.0px;letter-spacing:-0.29px;color:#8a8a8a;">1000&#x27;  0&quot;</span>
<div style="position:absolute;left:96.5px;top:397px;width:92px;height:17px;border:1.500px solid #222;background:#fff;box-sizing:border-box"></div>
<div style="position:absolute;left:100px;top:399.5px;width:13px;height:13px;border:1px solid #333;background:#fff;box-sizing:border-box"><svg width="11" height="11" viewBox="0 0 11 11" style="position:absolute;left:0;top:0"><path d="M2 5.500l2.500 2.700L9 2.500" fill="none" stroke="#222" stroke-width="1.300"/></svg></div>
<div style="position:absolute;left:3px;top:415px;width:199px;height:17px;background:#dadada"></div>
<span class="t" style="left:6.0px;top:417.3px;letter-spacing:-0.61px;color:#111;">Camera</span>
<svg style="position:absolute;left:188px;top:419px;" width="9" height="10" viewBox="0 0 9 10"><path d="M1.500 4.500l3-3 3 3M1.500 8.500l3-3 3 3" fill="none" stroke="#222" stroke-width="1.200"/></svg>
<span class="t" style="left:11.0px;top:434.0px;letter-spacing:-0.29px;color:#111;">Rendering Set...</span>
<div style="position:absolute;left:3px;top:449.5px;width:199px;height:0px;border-top:1px dotted #a8a8a8"></div>
<div style="position:absolute;left:96px;top:432px;width:0px;height:18px;border-left:1px dotted #a8a8a8"></div>
<div style="position:absolute;left:188.5px;top:432px;width:0px;height:18px;border-left:1px dotted #a8a8a8"></div>
<span class="t" style="left:11.0px;top:452.0px;letter-spacing:-0.17px;color:#8a8a8a;">Locked Orient...</span>
<div style="position:absolute;left:3px;top:467.5px;width:199px;height:0px;border-top:1px dotted #a8a8a8"></div>
<div style="position:absolute;left:96px;top:450px;width:0px;height:18px;border-left:1px dotted #a8a8a8"></div>
<div style="position:absolute;left:188.5px;top:450px;width:0px;height:18px;border-left:1px dotted #a8a8a8"></div>
<span class="t" style="left:11.0px;top:470.0px;letter-spacing:-0.24px;color:#8a8a8a;">Perspective</span>
<div style="position:absolute;left:3px;top:485.5px;width:199px;height:0px;border-top:1px dotted #a8a8a8"></div>
<div style="position:absolute;left:96px;top:468px;width:0px;height:18px;border-left:1px dotted #a8a8a8"></div>
<div style="position:absolute;left:188.5px;top:468px;width:0px;height:18px;border-left:1px dotted #a8a8a8"></div>
<span class="t" style="left:11.0px;top:488.0px;letter-spacing:-0.34px;color:#111;">Eye Elevation</span>
<div style="position:absolute;left:3px;top:503.5px;width:199px;height:0px;border-top:1px dotted #a8a8a8"></div>
<div style="position:absolute;left:96px;top:486px;width:0px;height:18px;border-left:1px dotted #a8a8a8"></div>
<div style="position:absolute;left:188.5px;top:486px;width:0px;height:18px;border-left:1px dotted #a8a8a8"></div>
<span class="t" style="left:11.0px;top:506.0px;letter-spacing:-0.13px;color:#111;">Target Elevation</span>
<div style="position:absolute;left:3px;top:521.5px;width:199px;height:0px;border-top:1px dotted #a8a8a8"></div>
<div style="position:absolute;left:96px;top:504px;width:0px;height:18px;border-left:1px dotted #a8a8a8"></div>
<div style="position:absolute;left:188.5px;top:504px;width:0px;height:18px;border-left:1px dotted #a8a8a8"></div>
<span class="t" style="left:11.0px;top:524.0px;letter-spacing:-0.27px;color:#8a8a8a;">Camera Positi...</span>
<div style="position:absolute;left:3px;top:539.5px;width:199px;height:0px;border-top:1px dotted #a8a8a8"></div>
<div style="position:absolute;left:96px;top:522px;width:0px;height:18px;border-left:1px dotted #a8a8a8"></div>
<div style="position:absolute;left:188.5px;top:522px;width:0px;height:18px;border-left:1px dotted #a8a8a8"></div>
<div style="position:absolute;left:97px;top:433px;width:91px;height:16.5px;background:#e1e1e1;border:1px solid #c4c4c4;border-bottom:2px solid #9c9c9c;border-right:1.500px solid #a8a8a8;box-sizing:border-box"></div>
<span class="t" style="left:128.0px;top:434.0px;letter-spacing:-0.24px;color:#111;">Edit...</span>
<div style="position:absolute;left:100px;top:453.5px;width:13px;height:13px;border:1px solid #b8b8b8;background:#fff;box-sizing:border-box"></div>
<div style="position:absolute;left:100px;top:471.5px;width:13px;height:13px;border:1px solid #b8b8b8;background:#fff;box-sizing:border-box"></div>
<span class="t" style="left:99.0px;top:488.0px;letter-spacing:-0.26px;color:#111;">94&#x27;  6 183/256&quot;</span>
<span class="t" style="left:99.0px;top:506.0px;letter-spacing:-0.20px;color:#111;">83&#x27;  1 1/256&quot;</span>
<span class="t" style="left:99.0px;top:524.0px;letter-spacing:0.18px;color:#8a8a8a;">Adjusting</span>
<div style="position:absolute;left:3px;top:541px;width:199px;height:6px;background:#dadada"></div>
<span class="t" style="left:6.0px;top:543.3px;letter-spacing:-0.10px;color:#111;clip-path:inset(0 0 9px 0);">Identity Data</span>
<svg style="position:absolute;left:188px;top:542px;" width="9" height="5" viewBox="0 0 9 5"><path d="M1.500 4.500l3-3 3 3" fill="none" stroke="#222" stroke-width="1.200"/></svg>
<div style="position:absolute;left:202px;top:289px;width:17px;height:257px;background:#f0f0f0"></div>
<div style="position:absolute;left:205px;top:366.5px;width:12px;height:82px;background:#cdcdcd"></div>
<svg style="position:absolute;left:206px;top:293px;" width="10" height="8" viewBox="0 0 10 8"><path d="M1 6l4-4 4 4" fill="none" stroke="#444" stroke-width="1.800"/></svg>
<svg style="position:absolute;left:206px;top:536px;" width="10" height="8" viewBox="0 0 10 8"><path d="M1 2l4 4 4-4" fill="none" stroke="#444" stroke-width="1.800"/></svg>
<span class="t" style="left:5.0px;top:553.0px;letter-spacing:-0.11px;color:#0563c1;text-decoration:underline;">Properties help</span>
<div style="position:absolute;left:144px;top:550px;width:73px;height:21.5px;background:#cfcfcf;border:1px solid #bdbdbd;box-sizing:border-box"></div>
<span class="t" style="left:165.0px;top:554.0px;letter-spacing:0.20px;color:#8e8e8e;">Apply</span>
<div style="position:absolute;left:1px;top:576px;width:224px;height:3px;background:#f0f0f0"></div>
<div style="position:absolute;left:1px;top:579px;width:220px;height:17.8px;background:#bfcddc"></div>
<span class="t" style="left:5.0px;top:582.3px;letter-spacing:-0.28px;color:#111;">Project Browser - Stockton120</span>
<svg style="position:absolute;left:206.5px;top:584.5px;" width="9" height="8" viewBox="0 0 9 8"><path d="M1 1l7 6.500M8 1L1 7.500" stroke="#111" stroke-width="1.800"/></svg>
<div style="position:absolute;left:2px;top:599px;width:218px;height:384px;background:#fff;border:1px solid #9a9a9a;border-top:2px solid #6e6e6e;border-left:1.500px solid #6e6e6e;border-bottom:none;box-sizing:border-box;overflow:hidden"></div>
<svg style="position:absolute;left:0px;top:600px;" width="220" height="384" viewBox="0 600 220 384"><path d="M11.500 615V966" stroke="#999" stroke-dasharray="1 2" fill="none"/><path d="M31.500 621V742 M31.500 801V832 M31.500 855V966" stroke="#999" stroke-dasharray="1 2" fill="none"/><path d="M16.5 611.5H23" stroke="#999" stroke-dasharray="1 2" fill="none"/><rect x="7.5" y="607.5" width="8" height="8" rx="1" fill="#fff" stroke="#919191"/><path d="M9 611.5h5" stroke="#2b3f8a" stroke-width="1"/><path d="M36.5 629.5H46" stroke="#999" stroke-dasharray="1 2" fill="none"/><rect x="27.5" y="625.5" width="8" height="8" rx="1" fill="#fff" stroke="#919191"/><path d="M29 629.5h5" stroke="#2b3f8a" stroke-width="1"/><path d="M31.5 627v5" stroke="#2b3f8a" stroke-width="1"/><path d="M36.5 647.5H46" stroke="#999" stroke-dasharray="1 2" fill="none"/><rect x="27.5" y="643.5" width="8" height="8" rx="1" fill="#fff" stroke="#919191"/><path d="M29 647.5h5" stroke="#2b3f8a" stroke-width="1"/><path d="M31.5 645v5" stroke="#2b3f8a" stroke-width="1"/><path d="M36.5 665.5H46" stroke="#999" stroke-dasharray="1 2" fill="none"/><rect x="27.5" y="661.5" width="8" height="8" rx="1" fill="#fff" stroke="#919191"/><path d="M29 665.5h5" stroke="#2b3f8a" stroke-width="1"/><path d="M31.5 663v5" stroke="#2b3f8a" stroke-width="1"/><path d="M36.5 683.5H46" stroke="#999" stroke-dasharray="1 2" fill="none"/><rect x="27.5" y="679.5" width="8" height="8" rx="1" fill="#fff" stroke="#919191"/><path d="M29 683.5h5" stroke="#2b3f8a" stroke-width="1"/><path d="M31.5 681v5" stroke="#2b3f8a" stroke-width="1"/><path d="M36.5 701.5H46" stroke="#999" stroke-dasharray="1 2" fill="none"/><rect x="27.5" y="697.5" width="8" height="8" rx="1" fill="#fff" stroke="#919191"/><path d="M29 701.5h5" stroke="#2b3f8a" stroke-width="1"/><path d="M31.5 699v5" stroke="#2b3f8a" stroke-width="1"/><path d="M36.5 719.5H46" stroke="#999" stroke-dasharray="1 2" fill="none"/><rect x="27.5" y="715.5" width="8" height="8" rx="1" fill="#fff" stroke="#919191"/><path d="M29 719.5h5" stroke="#2b3f8a" stroke-width="1"/><path d="M31.5 717v5" stroke="#2b3f8a" stroke-width="1"/><path d="M36.5 737.5H46" stroke="#999" stroke-dasharray="1 2" fill="none"/><rect x="27.5" y="733.5" width="8" height="8" rx="1" fill="#fff" stroke="#919191"/><path d="M29 737.5h5" stroke="#2b3f8a" stroke-width="1"/><path d="M31.5 735v5" stroke="#2b3f8a" stroke-width="1"/><path d="M16.5 755.5H23" stroke="#999" stroke-dasharray="1 2" fill="none"/><rect x="7.5" y="751.5" width="8" height="8" rx="1" fill="#fff" stroke="#919191"/><path d="M9 755.5h5" stroke="#2b3f8a" stroke-width="1"/><path d="M11.5 753v5" stroke="#2b3f8a" stroke-width="1"/><path d="M16.5 773.5H23" stroke="#999" stroke-dasharray="1 2" fill="none"/><rect x="7.5" y="769.5" width="8" height="8" rx="1" fill="#fff" stroke="#919191"/><path d="M9 773.5h5" stroke="#2b3f8a" stroke-width="1"/><path d="M11.5 771v5" stroke="#2b3f8a" stroke-width="1"/><path d="M16.5 791.5H23" stroke="#999" stroke-dasharray="1 2" fill="none"/><rect x="7.5" y="787.5" width="8" height="8" rx="1" fill="#fff" stroke="#919191"/><path d="M9 791.5h5" stroke="#2b3f8a" stroke-width="1"/><path d="M36.5 809.5H46" stroke="#999" stroke-dasharray="1 2" fill="none"/><rect x="27.5" y="805.5" width="8" height="8" rx="1" fill="#fff" stroke="#919191"/><path d="M29 809.5h5" stroke="#2b3f8a" stroke-width="1"/><path d="M31.5 807v5" stroke="#2b3f8a" stroke-width="1"/><path d="M36.5 827.5H46" stroke="#999" stroke-dasharray="1 2" fill="none"/><rect x="27.5" y="823.5" width="8" height="8" rx="1" fill="#fff" stroke="#919191"/><path d="M29 827.5h5" stroke="#2b3f8a" stroke-width="1"/><path d="M31.5 825v5" stroke="#2b3f8a" stroke-width="1"/><path d="M16.5 845.5H23" stroke="#999" stroke-dasharray="1 2" fill="none"/><rect x="7.5" y="841.5" width="8" height="8" rx="1" fill="#fff" stroke="#919191"/><path d="M9 845.5h5" stroke="#2b3f8a" stroke-width="1"/><path d="M36.5 863.5H46" stroke="#999" stroke-dasharray="1 2" fill="none"/><rect x="27.5" y="859.5" width="8" height="8" rx="1" fill="#fff" stroke="#919191"/><path d="M29 863.5h5" stroke="#2b3f8a" stroke-width="1"/><path d="M31.5 861v5" stroke="#2b3f8a" stroke-width="1"/><path d="M36.5 881.5H46" stroke="#999" stroke-dasharray="1 2" fill="none"/><rect x="27.5" y="877.5" width="8" height="8" rx="1" fill="#fff" stroke="#919191"/><path d="M29 881.5h5" stroke="#2b3f8a" stroke-width="1"/><path d="M31.5 879v5" stroke="#2b3f8a" stroke-width="1"/><path d="M36.5 899.5H46" stroke="#999" stroke-dasharray="1 2" fill="none"/><rect x="27.5" y="895.5" width="8" height="8" rx="1" fill="#fff" stroke="#919191"/><path d="M29 899.5h5" stroke="#2b3f8a" stroke-width="1"/><path d="M31.5 897v5" stroke="#2b3f8a" stroke-width="1"/><path d="M36.5 917.5H46" stroke="#999" stroke-dasharray="1 2" fill="none"/><rect x="27.5" y="913.5" width="8" height="8" rx="1" fill="#fff" stroke="#919191"/><path d="M29 917.5h5" stroke="#2b3f8a" stroke-width="1"/><path d="M31.5 915v5" stroke="#2b3f8a" stroke-width="1"/><path d="M36.5 935.5H46" stroke="#999" stroke-dasharray="1 2" fill="none"/><rect x="27.5" y="931.5" width="8" height="8" rx="1" fill="#fff" stroke="#919191"/><path d="M29 935.5h5" stroke="#2b3f8a" stroke-width="1"/><path d="M31.5 933v5" stroke="#2b3f8a" stroke-width="1"/><path d="M36.5 953.5H46" stroke="#999" stroke-dasharray="1 2" fill="none"/><rect x="27.5" y="949.5" width="8" height="8" rx="1" fill="#fff" stroke="#919191"/><path d="M29 953.5h5" stroke="#2b3f8a" stroke-width="1"/><path d="M31.5 951v5" stroke="#2b3f8a" stroke-width="1"/></svg>
<span class="t" style="left:45.0px;top:603.3px;letter-spacing:-0.06px;color:#111;width:157px;overflow:hidden;">Views (* by Classification, by Ty</span>
<span class="t" style="left:49.0px;top:621.3px;letter-spacing:0.20px;color:#111;">Admin</span>
<span class="t" style="left:49.0px;top:639.3px;letter-spacing:-0.00px;color:#111;">Consultant Communication</span>
<span class="t" style="left:49.0px;top:657.3px;letter-spacing:-0.11px;color:#111;">Export</span>
<span class="t" style="left:49.0px;top:675.3px;letter-spacing:0.03px;color:#111;">Internal Coordination</span>
<span class="t" style="left:49.0px;top:693.3px;letter-spacing:-0.13px;color:#111;">Presentation Drawings</span>
<div style="position:absolute;left:46px;top:709.5px;width:107px;height:17px;background:#e5e5e5"></div>
<span class="t" style="left:49.0px;top:711.3px;letter-spacing:-0.13px;color:#111;">Technical Drawings</span>
<span class="t" style="left:49.0px;top:729.3px;letter-spacing:0.05px;color:#111;">Work</span>
<span class="t" style="left:45.0px;top:747.3px;letter-spacing:-0.29px;color:#111;">Legends</span>
<span class="t" style="left:45.0px;top:765.3px;letter-spacing:-0.07px;color:#111;">Schedules/Quantities</span>
<span class="t" style="left:45.0px;top:783.3px;letter-spacing:-0.16px;color:#111;width:157px;overflow:hidden;">Sheets (* by Discipline, by User</span>
<span class="t" style="left:49.0px;top:801.3px;letter-spacing:-1.67px;color:#111;">???</span>
<span class="t" style="left:49.0px;top:819.3px;letter-spacing:0.20px;color:#111;">Admin</span>
<span class="t" style="left:45.0px;top:837.3px;letter-spacing:-0.34px;color:#111;">Families</span>
<span class="t" style="left:49.0px;top:855.3px;letter-spacing:0.02px;color:#111;">Annotation Symbols</span>
<span class="t" style="left:49.0px;top:873.3px;letter-spacing:-0.55px;color:#111;">Cable Trays</span>
<span class="t" style="left:49.0px;top:891.3px;letter-spacing:-0.42px;color:#111;">Casework</span>
<span class="t" style="left:49.0px;top:909.3px;letter-spacing:-0.21px;color:#111;">Ceilings</span>
<span class="t" style="left:49.0px;top:927.3px;letter-spacing:-0.19px;color:#111;">Columns</span>
<span class="t" style="left:49.0px;top:945.3px;letter-spacing:-0.04px;color:#111;">Conduits</span>
<div style="position:absolute;left:202px;top:600px;width:17px;height:383px;background:#f0f0f0"></div>
<svg style="position:absolute;left:0px;top:600px;" width="220" height="384" viewBox="0 600 220 384"><rect x="28" y="606" width="7" height="7" rx="2" fill="none" stroke="#333" stroke-width="1.100"/><path d="M24.500 606v-3h3M38.500 606v-3h-3M24.500 613v3h3M38.500 613v3h-3" fill="none" stroke="#555" stroke-width="1"/><rect x="24.500" y="747.500" width="14" height="12" fill="#fff" stroke="#333"/><rect x="25" y="748" width="13" height="3" fill="#555"/><path d="M27 754h3M27 757h3M32 754h5M32 757h5" stroke="#444"/><rect x="24.500" y="766.500" width="14" height="11" fill="#fff" stroke="#333"/><path d="M25 770h13M25 773.500h13M29.500 767v10" stroke="#444" fill="none"/><path d="M24.500 783.500h10l4 3.500v9h-14z" fill="#fff" stroke="#333"/><rect x="27" y="789" width="4" height="4.500" fill="none" stroke="#555"/><rect x="33" y="789" width="3" height="4.500" fill="none" stroke="#555"/><path d="M25.500 838h5.500v6h-5.500z" fill="#fff" stroke="#333"/><path d="M33.500 837.500h4.500v13h-13.500v-4h9z" fill="#fff" stroke="#333" stroke-width="1.200"/></svg>
<div style="position:absolute;left:204.5px;top:618px;width:14.5px;height:101px;background:#cdcdcd"></div>
<svg style="position:absolute;left:206px;top:606px;" width="10" height="8" viewBox="0 0 10 8"><path d="M1 6l4-4 4 4" fill="none" stroke="#444" stroke-width="1.800"/></svg>
<svg style="position:absolute;left:206px;top:954px;" width="10" height="8" viewBox="0 0 10 8"><path d="M1 2l4 4 4-4" fill="none" stroke="#444" stroke-width="1.800"/></svg>
<div style="position:absolute;left:3px;top:966px;width:217px;height:16px;background:#f0f0f0"></div>
<div style="position:absolute;left:20px;top:966px;width:107px;height:16px;background:#cdcdcd"></div>
<svg style="position:absolute;left:8px;top:969px;" width="8" height="10" viewBox="0 0 8 10"><path d="M6 1L2 5l4 4" fill="none" stroke="#444" stroke-width="1.800"/></svg>
<svg style="position:absolute;left:192px;top:969px;" width="8" height="10" viewBox="0 0 8 10"><path d="M2 1l4 4-4 4" fill="none" stroke="#444" stroke-width="1.800"/></svg>
<div style="position:absolute;left:225.5px;top:171px;width:905.5px;height:813px;background:#f0f0f0"></div>
<div style="position:absolute;left:225.5px;top:171px;width:888px;height:794px;background:#fff;border-left:2px solid #6a6a6a;border-top:2px solid #6a6a6a;box-sizing:border-box"></div>
<svg style="position:absolute;left:0;top:0" width="1134" height="1010" viewBox="0 0 1134 1010" shape-rendering="geometricPrecision"><polygon points="470.8,384.2 839.6,227.4 839.6,767.8 470.8,924.1" fill="#c0c0f0" stroke="none" stroke-width="1" stroke-linejoin="round"/><polygon points="534.3,346.0 548.4,346.0 548.4,417.5 534.3,407.9" fill="#7171a7" stroke="#1a1a5a" stroke-width="0.7" stroke-linejoin="round"/><polygon points="470.8,436.9 534.3,407.9 548.0,417.0 470.8,450.6" fill="#7171a7" stroke="#1a1a5a" stroke-width="0.7" stroke-linejoin="round"/><polygon points="603.5,388.0 733.3,331.2 746.0,339.0 603.5,401.0" fill="#7171a7" stroke="#1a1a5a" stroke-width="0.7" stroke-linejoin="round"/><polygon points="733.1,262.0 747.5,262.0 747.5,340.0 733.1,331.2" fill="#7171a7" stroke="#1a1a5a" stroke-width="0.7" stroke-linejoin="round"/><polygon points="788.7,315.0 828.3,298.5 839.6,307.3 839.6,309.4 788.7,330.8" fill="#7171a7" stroke="#1a1a5a" stroke-width="0.7" stroke-linejoin="round"/><polygon points="548.4,470.0 562.3,470.0 562.3,720.3 548.4,711.5" fill="#7171a7" stroke="#1a1a5a" stroke-width="0.7" stroke-linejoin="round"/><polygon points="470.8,744.2 548.4,711.5 561.5,719.6 470.8,758.5" fill="#7171a7" stroke="#1a1a5a" stroke-width="0.7" stroke-linejoin="round"/><polygon points="603.5,694.4 733.3,639.2 746.0,647.2 603.5,707.5" fill="#7171a7" stroke="#1a1a5a" stroke-width="0.7" stroke-linejoin="round"/><polygon points="733.3,390.0 747.1,390.0 747.1,648.0 733.3,639.2" fill="#7171a7" stroke="#1a1a5a" stroke-width="0.7" stroke-linejoin="round"/><polygon points="788.7,618.4 828.3,601.6 839.6,610.5 839.6,611.6 788.7,633.3" fill="#7171a7" stroke="#1a1a5a" stroke-width="0.7" stroke-linejoin="round"/><polygon points="534.6,770.0 548.0,770.0 548.0,893.0 534.6,884.5" fill="#7171a7" stroke="#1a1a5a" stroke-width="0.7" stroke-linejoin="round"/><polygon points="719.4,690.0 733.0,690.0 733.0,813.6 719.4,805.2" fill="#7171a7" stroke="#1a1a5a" stroke-width="0.7" stroke-linejoin="round"/><polyline points="546.8,352.0 546.8,416.5" fill="none" stroke="#10104a" stroke-width="2.8" /><polyline points="561.0,470.0 561.0,719.0" fill="none" stroke="#10104a" stroke-width="2.4" /><polyline points="546.8,780.0 546.8,892.0" fill="none" stroke="#10104a" stroke-width="2.8" /><polyline points="745.8,268.0 745.8,338.5" fill="none" stroke="#10104a" stroke-width="2.8" /><polyline points="745.8,395.0 745.8,646.5" fill="none" stroke="#10104a" stroke-width="2.8" /><polyline points="732.1,707.0 732.1,813.0" fill="none" stroke="#10104a" stroke-width="2.8" /><polyline points="472.0,449.6 547.0,416.8" fill="none" stroke="#05050f" stroke-width="3.2" stroke-dasharray="1.700 0.700"/><polyline points="603.5,400.6 745.5,338.7" fill="none" stroke="#05050f" stroke-width="3.2" stroke-dasharray="1.700 0.700"/><polyline points="788.7,330.4 826.0,314.6" fill="none" stroke="#05050f" stroke-width="3.2" stroke-dasharray="1.700 0.700"/><polyline points="471.8,757.6 560.9,719.2" fill="none" stroke="#05050f" stroke-width="3.2" stroke-dasharray="1.700 0.700"/><polyline points="603.5,707.1 745.5,646.9" fill="none" stroke="#05050f" stroke-width="3.2" stroke-dasharray="1.700 0.700"/><polyline points="788.7,632.9 826.3,616.2" fill="none" stroke="#05050f" stroke-width="3.2" stroke-dasharray="1.700 0.700"/><polyline points="470.8,384.2 839.6,227.4" fill="none" stroke="#111" stroke-width="1.7" stroke-dasharray="2 1"/><polyline points="470.8,384.2 470.8,924.1" fill="none" stroke="#000" stroke-width="1.6" /><polyline points="470.8,924.1 839.6,767.8" fill="none" stroke="#0c0c2c" stroke-width="1.8" stroke-dasharray="2 1"/><polyline points="839.2,227.6 839.2,767.8" fill="none" stroke="#16165a" stroke-width="1.4" /><polygon points="459.4,439.0 470.8,434.9 470.8,449.0 472.6,450.2 459.4,444.3" fill="#9a9a9a" stroke="#111" stroke-width="1" stroke-linejoin="round"/><polygon points="459.4,444.3 472.6,450.2 479.7,470.5 459.9,478.4" fill="#7c7c7c" stroke="#111" stroke-width="1" stroke-linejoin="round"/><polygon points="459.9,478.4 479.7,470.5 484.2,484.5 471.3,486.3 459.9,480.6" fill="#9a9a9a" stroke="#111" stroke-width="1" stroke-linejoin="round"/><polygon points="459.9,480.6 471.3,486.3 484.2,481.9 484.2,488.3 471.3,493.3 459.9,487.3" fill="#909090" stroke="#111" stroke-width="1" stroke-linejoin="round"/><polygon points="459.9,489.3 471.3,495.2 484.2,489.3 484.2,497.2 459.9,500.2" fill="#787878" stroke="#111" stroke-width="1" stroke-linejoin="round"/><polygon points="459.9,500.2 484.2,492.3 484.2,505.1 471.3,508.1 459.9,502.2" fill="#9a9a9a" stroke="#111" stroke-width="1" stroke-linejoin="round"/><polygon points="459.4,502.2 471.3,508.1 471.3,513.1 459.4,507.1" fill="#888" stroke="#111" stroke-width="1" stroke-linejoin="round"/><polygon points="471.3,508.1 484.2,504.2 484.2,518.9 471.3,513.1" fill="#6c6c6c" stroke="#111" stroke-width="1" stroke-linejoin="round"/><polygon points="459.5,748.8 470.8,744.3 470.8,756.7 472.8,757.7 459.5,753.4" fill="#9a9a9a" stroke="#111" stroke-width="1" stroke-linejoin="round"/><polygon points="459.5,753.4 472.8,757.7 479.7,770.6 459.5,772.6" fill="#7c7c7c" stroke="#111" stroke-width="1" stroke-linejoin="round"/><polygon points="459.5,772.6 479.7,765.6 484.7,777.5 471.8,781.9 459.5,775.9" fill="#9a9a9a" stroke="#111" stroke-width="1" stroke-linejoin="round"/><polygon points="459.5,775.9 471.8,781.9 484.7,777.5 484.7,783.0 471.8,787.0 459.5,781.0" fill="#909090" stroke="#111" stroke-width="1" stroke-linejoin="round"/><polygon points="459.5,783.0 471.8,789.0 484.7,784.0 484.7,791.0 459.5,795.0" fill="#787878" stroke="#111" stroke-width="1" stroke-linejoin="round"/><polygon points="459.5,794.0 484.7,786.5 484.7,798.0 471.8,802.0 459.5,796.0" fill="#9a9a9a" stroke="#111" stroke-width="1" stroke-linejoin="round"/><polygon points="459.5,796.0 471.8,802.0 471.8,806.0 459.5,799.3" fill="#888" stroke="#111" stroke-width="1" stroke-linejoin="round"/><polygon points="471.8,802.0 484.7,798.0 484.7,812.2 471.8,806.0" fill="#6c6c6c" stroke="#111" stroke-width="1" stroke-linejoin="round"/><polygon points="548.6,353.1 574.5,354.7 574.5,460.0 548.6,460.0" fill="#9a9a9a" stroke="none" stroke-width="1" stroke-linejoin="round"/><polygon points="562.3,465.0 574.5,465.0 574.5,745.0 562.3,745.0" fill="#9a9a9a" stroke="none" stroke-width="1" stroke-linejoin="round"/><polygon points="548.4,775.0 574.5,775.0 574.4,894.0 568.8,894.4 548.4,892.4" fill="#9a9a9a" stroke="none" stroke-width="1" stroke-linejoin="round"/><polygon points="747.4,268.3 759.6,275.5 759.6,700.0 747.4,700.0" fill="#9a9a9a" stroke="none" stroke-width="1" stroke-linejoin="round"/><polygon points="733.3,690.0 759.6,690.0 759.6,815.5 745.1,814.8 731.7,813.2" fill="#9a9a9a" stroke="none" stroke-width="1" stroke-linejoin="round"/><polygon points="472.6,450.2 547.0,416.8 548.6,416.8 574.4,447.5 574.4,450.0 484.2,485.2 479.7,470.5" fill="#8b8b8b" stroke="none" stroke-width="1" stroke-linejoin="round"/><polygon points="603.5,401.0 745.5,338.7 747.4,338.7 759.6,367.8 759.6,370.0 603.5,436.0" fill="#9a9a9a" stroke="none" stroke-width="1" stroke-linejoin="round"/><polygon points="788.7,330.8 825.3,315.0 836.2,335.7 788.7,356.5" fill="#9a9a9a" stroke="none" stroke-width="1" stroke-linejoin="round"/><polygon points="472.8,757.7 560.9,719.4 562.3,719.5 574.4,739.4 574.4,742.0 484.7,777.5 479.7,770.6" fill="#9a9a9a" stroke="none" stroke-width="1" stroke-linejoin="round"/><polygon points="603.5,707.5 745.5,647.1 747.4,647.1 759.6,661.4 759.6,664.0 603.5,729.0" fill="#9a9a9a" stroke="none" stroke-width="1" stroke-linejoin="round"/><polygon points="788.7,633.3 825.3,617.4 836.8,628.3 788.7,648.1" fill="#9a9a9a" stroke="none" stroke-width="1" stroke-linejoin="round"/><polygon points="825.3,315.0 841.2,308.6 852.1,327.8 836.2,335.7" fill="#9a9a9a" stroke="#111" stroke-width="1" stroke-linejoin="round"/><polygon points="836.2,335.7 852.1,327.8 852.1,344.7 841.0,348.5 836.2,351.5" fill="#6c6c6c" stroke="#111" stroke-width="1" stroke-linejoin="round"/><polygon points="836.2,352.5 841.0,351.0 852.1,347.5 852.1,361.5 838.2,367.4 836.2,368.4" fill="#6c6c6c" stroke="#111" stroke-width="1" stroke-linejoin="round"/><polygon points="825.3,617.4 841.2,611.9 852.1,621.8 836.8,628.3" fill="#9a9a9a" stroke="#111" stroke-width="1" stroke-linejoin="round"/><polygon points="836.8,628.3 852.1,621.8 852.1,636.2 841.0,640.0 836.8,643.5" fill="#6c6c6c" stroke="#111" stroke-width="1" stroke-linejoin="round"/><polygon points="836.8,644.5 841.0,643.0 852.1,641.2 852.1,655.0 836.8,661.4" fill="#6c6c6c" stroke="#111" stroke-width="1" stroke-linejoin="round"/><polygon points="574.5,354.7 589.3,349.1 603.6,342.4 603.5,881.9 589.2,887.4 588.0,888.4 574.4,894.0" fill="#6c6c6c" stroke="none" stroke-width="1" stroke-linejoin="round"/><polygon points="759.6,275.5 774.8,269.1 788.7,262.4 788.7,802.9 775.4,808.2 775.4,795.3 773.9,795.3 773.9,809.2 759.6,815.5" fill="#6c6c6c" stroke="none" stroke-width="1" stroke-linejoin="round"/><polygon points="484.2,484.9 576.0,446.0 576.0,480.6 484.2,519.5" fill="#6c6c6c" stroke="none" stroke-width="1" stroke-linejoin="round"/><polygon points="602.0,435.0 761.0,367.6 761.0,402.2 602.0,469.6" fill="#6c6c6c" stroke="none" stroke-width="1" stroke-linejoin="round"/><polygon points="787.0,356.6 836.2,335.8 836.2,370.4 787.0,391.2" fill="#6c6c6c" stroke="none" stroke-width="1" stroke-linejoin="round"/><polygon points="484.7,777.6 576.0,738.7 576.0,773.3 484.7,812.2" fill="#6c6c6c" stroke="none" stroke-width="1" stroke-linejoin="round"/><polygon points="602.0,727.7 761.0,660.0 761.0,694.6 602.0,762.3" fill="#6c6c6c" stroke="none" stroke-width="1" stroke-linejoin="round"/><polygon points="787.0,648.9 836.8,627.7 836.8,662.3 787.0,683.5" fill="#6c6c6c" stroke="none" stroke-width="1" stroke-linejoin="round"/><polyline points="548.6,353.1 548.6,416.8" fill="none" stroke="#0a0a0a" stroke-width="1" /><polyline points="562.3,487.0 562.3,719.5" fill="none" stroke="#0a0a0a" stroke-width="1" /><polyline points="548.4,786.0 548.4,892.4" fill="none" stroke="#0a0a0a" stroke-width="1" /><polyline points="574.5,354.7 574.5,447.0" fill="none" stroke="#0a0a0a" stroke-width="1" /><polyline points="574.5,480.7 574.5,739.4" fill="none" stroke="#0a0a0a" stroke-width="1" /><polyline points="574.5,774.4 574.4,894.0" fill="none" stroke="#0a0a0a" stroke-width="1" /><polyline points="603.5,342.4 603.5,434.5" fill="none" stroke="#0a0a0a" stroke-width="1" /><polyline points="603.5,468.5 603.5,727.0" fill="none" stroke="#0a0a0a" stroke-width="1" /><polyline points="603.5,762.0 603.5,881.9" fill="none" stroke="#0a0a0a" stroke-width="1" /><polyline points="548.4,892.4 568.8,894.4 574.4,894.0 588.0,888.4" fill="none" stroke="#0a0a0a" stroke-width="1" /><polyline points="589.2,887.4 603.5,881.9" fill="none" stroke="#0a0a0a" stroke-width="1" /><polyline points="747.4,268.3 747.4,338.7" fill="none" stroke="#0a0a0a" stroke-width="1" /><polyline points="747.4,408.0 747.4,647.1" fill="none" stroke="#0a0a0a" stroke-width="1" /><polyline points="733.3,707.0 733.3,813.0" fill="none" stroke="#0a0a0a" stroke-width="1" /><polyline points="759.6,275.5 759.6,367.8" fill="none" stroke="#0a0a0a" stroke-width="1" /><polyline points="759.6,402.2 759.6,661.4" fill="none" stroke="#0a0a0a" stroke-width="1" /><polyline points="759.6,695.6 759.6,815.5" fill="none" stroke="#0a0a0a" stroke-width="1" /><polyline points="788.7,262.4 788.7,356.0" fill="none" stroke="#0a0a0a" stroke-width="1" /><polyline points="788.7,389.5 788.7,648.1" fill="none" stroke="#0a0a0a" stroke-width="1" /><polyline points="788.7,681.2 788.7,802.9" fill="none" stroke="#0a0a0a" stroke-width="1" /><polyline points="731.7,813.2 745.1,814.8 759.6,815.5 773.9,809.2" fill="none" stroke="#0a0a0a" stroke-width="1" /><polyline points="775.4,808.2 788.7,802.9" fill="none" stroke="#0a0a0a" stroke-width="1" /><polyline points="484.2,484.9 574.5,446.6" fill="none" stroke="#0a0a0a" stroke-width="1" /><polyline points="484.2,519.5 574.5,481.2" fill="none" stroke="#0a0a0a" stroke-width="1" /><polyline points="603.5,434.3 759.6,368.2" fill="none" stroke="#0a0a0a" stroke-width="1" /><polyline points="603.5,468.9 759.6,402.8" fill="none" stroke="#0a0a0a" stroke-width="1" /><polyline points="788.7,355.9 836.2,335.8" fill="none" stroke="#0a0a0a" stroke-width="1" /><polyline points="788.7,390.5 836.2,370.4" fill="none" stroke="#0a0a0a" stroke-width="1" /><polyline points="484.7,777.6 574.5,739.4" fill="none" stroke="#0a0a0a" stroke-width="1" /><polyline points="484.7,812.2 574.5,774.0" fill="none" stroke="#0a0a0a" stroke-width="1" /><polyline points="603.5,727.0 759.6,660.6" fill="none" stroke="#0a0a0a" stroke-width="1" /><polyline points="603.5,761.6 759.6,695.2" fill="none" stroke="#0a0a0a" stroke-width="1" /><polyline points="788.7,648.2 836.8,627.7" fill="none" stroke="#0a0a0a" stroke-width="1" /><polyline points="788.7,682.8 836.8,662.3" fill="none" stroke="#0a0a0a" stroke-width="1" /><polyline points="484.2,484.9 484.2,518.9" fill="none" stroke="#0a0a0a" stroke-width="1" /><polyline points="484.7,777.5 484.7,812.2" fill="none" stroke="#0a0a0a" stroke-width="1" /><polyline points="472.6,450.2 484.2,484.9" fill="none" stroke="#0a0a0a" stroke-width="1" /><polyline points="472.8,757.7 479.7,770.6 484.7,777.5" fill="none" stroke="#0a0a0a" stroke-width="1" /><polyline points="836.2,335.7 836.2,368.4" fill="none" stroke="#0a0a0a" stroke-width="1" /><polyline points="836.8,628.3 836.8,661.4" fill="none" stroke="#0a0a0a" stroke-width="1" /><polyline points="825.3,315.0 836.2,335.7" fill="none" stroke="#0a0a0a" stroke-width="1" /><polyline points="825.3,617.4 836.8,628.3" fill="none" stroke="#0a0a0a" stroke-width="1" /><polyline points="548.6,416.8 574.5,446.6 589.2,457.4 603.5,434.3" fill="none" stroke="#0a0a0a" stroke-width="1" /><polyline points="574.5,481.2 589.2,457.4 603.5,468.9" fill="none" stroke="#0a0a0a" stroke-width="1" /><polyline points="747.4,338.7 759.6,368.2 774.5,378.9 788.7,355.9" fill="none" stroke="#0a0a0a" stroke-width="1" /><polyline points="759.6,402.8 774.5,378.9 788.7,390.5" fill="none" stroke="#0a0a0a" stroke-width="1" /><polyline points="562.3,719.5 574.5,739.4 589.2,750.1 603.5,727.0" fill="none" stroke="#0a0a0a" stroke-width="1" /><polyline points="574.5,774.0 589.2,750.1 603.5,761.6" fill="none" stroke="#0a0a0a" stroke-width="1" /><polyline points="747.4,647.1 759.6,660.6 774.5,671.0 788.7,648.2" fill="none" stroke="#0a0a0a" stroke-width="1" /><polyline points="759.6,695.2 774.5,671.0 788.7,682.8" fill="none" stroke="#0a0a0a" stroke-width="1" /><polyline points="511.9,433.9 522.8,468.5 523.3,502.4" fill="none" stroke="#0a0a0a" stroke-width="1" /><polyline points="512.4,742.9 523.3,761.7 523.3,795.8" fill="none" stroke="#0a0a0a" stroke-width="1" /><polyline points="701.6,669.3 712.5,680.8 712.5,714.9" fill="none" stroke="#0a0a0a" stroke-width="1" /><polyline points="641.8,384.3 651.5,413.6 651.5,448.2" fill="none" stroke="#0a0a0a" stroke-width="1" /><polyline points="702.0,359.1 711.6,388.2 711.6,422.8" fill="none" stroke="#0a0a0a" stroke-width="1" /><polyline points="641.8,691.9 651.5,706.6 651.5,741.2" fill="none" stroke="#0a0a0a" stroke-width="1" /><polyline points="548.8,367.4 558.3,368.3 569.4,369.8 574.6,369.8 588.5,363.4" fill="none" stroke="#0a0a0a" stroke-width="1" /><polyline points="590.0,362.6 603.6,357.0" fill="none" stroke="#0a0a0a" stroke-width="1" /><polyline points="562.3,651.1 574.4,658.4 588.5,652.2" fill="none" stroke="#0a0a0a" stroke-width="1" /><polyline points="590.0,651.5 603.5,646.1" fill="none" stroke="#0a0a0a" stroke-width="1" /><polyline points="548.4,853.8 560.9,854.8 574.4,854.8 588.0,849.4" fill="none" stroke="#0a0a0a" stroke-width="1" /><polyline points="589.2,848.8 603.5,843.3" fill="none" stroke="#0a0a0a" stroke-width="1" /><polyline points="747.8,281.8 759.3,289.8 774.0,283.8" fill="none" stroke="#0a0a0a" stroke-width="1" /><polyline points="775.6,283.0 788.7,277.9" fill="none" stroke="#0a0a0a" stroke-width="1" /><polyline points="747.1,571.9 759.6,579.2 773.9,573.5" fill="none" stroke="#0a0a0a" stroke-width="1" /><polyline points="775.8,571.9 788.3,566.9" fill="none" stroke="#0a0a0a" stroke-width="1" /><polyline points="733.3,773.2 747.1,775.5 759.6,775.5 773.9,769.6" fill="none" stroke="#0a0a0a" stroke-width="1" /><polyline points="775.8,768.6 789.7,763.3" fill="none" stroke="#0a0a0a" stroke-width="1" /><polyline points="484.2,502.2 588.0,458.2" fill="none" stroke="#0c0c0c" stroke-width="3" /><polyline points="484.2,502.2 588.0,458.2" fill="none" stroke="#8c8c8c" stroke-width="1.2" stroke-dasharray="1.600 1.200"/><polyline points="591.0,456.9 773.0,379.8" fill="none" stroke="#0c0c0c" stroke-width="3" /><polyline points="591.0,456.9 773.0,379.8" fill="none" stroke="#8c8c8c" stroke-width="1.2" stroke-dasharray="1.600 1.200"/><polyline points="776.0,378.6 836.2,353.1" fill="none" stroke="#0c0c0c" stroke-width="3" /><polyline points="776.0,378.6 836.2,353.1" fill="none" stroke="#8c8c8c" stroke-width="1.2" stroke-dasharray="1.600 1.200"/><polyline points="484.7,794.9 588.0,750.9" fill="none" stroke="#0c0c0c" stroke-width="3" /><polyline points="484.7,794.9 588.0,750.9" fill="none" stroke="#8c8c8c" stroke-width="1.2" stroke-dasharray="1.600 1.200"/><polyline points="591.0,749.6 773.0,672.2" fill="none" stroke="#0c0c0c" stroke-width="3" /><polyline points="591.0,749.6 773.0,672.2" fill="none" stroke="#8c8c8c" stroke-width="1.2" stroke-dasharray="1.600 1.200"/><polyline points="776.0,670.9 836.8,645.0" fill="none" stroke="#0c0c0c" stroke-width="3" /><polyline points="776.0,670.9 836.8,645.0" fill="none" stroke="#8c8c8c" stroke-width="1.2" stroke-dasharray="1.600 1.200"/><polygon points="841.0,348.8 852.6,344.9 852.6,347.4 841.0,351.2" fill="#fff" stroke="none" stroke-width="1" stroke-linejoin="round"/><polygon points="841.0,640.3 852.6,636.4 852.6,641.0 841.0,643.2" fill="#fff" stroke="none" stroke-width="1" stroke-linejoin="round"/><polyline points="589.2,349.1 589.2,887.4" fill="none" stroke="#000" stroke-width="2" /><polyline points="774.0,269.1 774.0,809.0" fill="none" stroke="#000" stroke-width="1" /><polyline points="775.6,269.1 775.6,597.0" fill="none" stroke="#000" stroke-width="0.8" /><polygon points="774.4,795.3 775.2,795.3 775.2,808.5 774.4,808.8" fill="#fff" stroke="none" stroke-width="1" stroke-linejoin="round"/><polygon points="534.1,345.3 581.0,325.1 603.6,342.4 589.3,349.1 574.6,354.7 548.8,353.1 544.8,353.1 534.1,356.3" fill="#888" stroke="#111" stroke-width="1" stroke-linejoin="round"/><polygon points="542.9,342.4 561.5,334.0 561.5,353.1 552.4,351.5" fill="#6c6c6c" stroke="#111" stroke-width="1" stroke-linejoin="round"/><polygon points="534.1,345.3 542.9,342.4 552.4,351.5 544.8,353.1" fill="#9a9a9a" stroke="#111" stroke-width="1" stroke-linejoin="round"/><polygon points="561.9,334.8 573.4,342.0 573.4,354.0 561.9,352.7" fill="#949494" stroke="#111" stroke-width="1" stroke-linejoin="round"/><polygon points="573.4,342.0 577.5,340.5 577.5,352.5 573.4,354.0" fill="#707070" stroke="#111" stroke-width="1" stroke-linejoin="round"/><polygon points="574.6,329.0 586.5,336.5 586.5,349.5 580.0,351.5 580.0,340.0 574.6,336.0" fill="#949494" stroke="#111" stroke-width="1" stroke-linejoin="round"/><polygon points="586.5,336.5 591.5,334.0 591.5,347.0 589.3,349.1 586.5,349.5" fill="#707070" stroke="#111" stroke-width="1" stroke-linejoin="round"/><polygon points="591.7,333.3 603.6,342.4 592.0,348.0" fill="#9a9a9a" stroke="#111" stroke-width="1" stroke-linejoin="round"/><polyline points="534.1,345.3 534.1,356.3" fill="none" stroke="#111" stroke-width="0.8" /><polygon points="733.1,260.4 766.0,246.1 788.7,262.4 774.8,269.1 759.3,275.5 747.8,268.3 744.6,268.5 733.1,271.9" fill="#888" stroke="#111" stroke-width="1" stroke-linejoin="round"/><polygon points="741.5,257.0 747.0,254.5 747.0,268.0 751.0,270.0" fill="#6c6c6c" stroke="#111" stroke-width="1" stroke-linejoin="round"/><polygon points="733.1,260.4 741.5,257.0 751.0,267.5 744.6,268.5" fill="#9a9a9a" stroke="#111" stroke-width="1" stroke-linejoin="round"/><polygon points="747.4,255.5 759.0,263.0 759.3,275.5 747.8,268.3" fill="#949494" stroke="#111" stroke-width="1" stroke-linejoin="round"/><polygon points="759.0,263.0 763.5,261.0 763.5,273.5 759.3,275.5" fill="#707070" stroke="#111" stroke-width="1" stroke-linejoin="round"/><polygon points="760.5,249.5 771.5,257.0 771.5,269.5 765.5,272.0 765.5,261.0 760.5,257.0" fill="#949494" stroke="#111" stroke-width="1" stroke-linejoin="round"/><polygon points="771.5,257.0 776.5,254.5 776.5,268.0 774.8,269.1 771.5,269.5" fill="#707070" stroke="#111" stroke-width="1" stroke-linejoin="round"/><polygon points="776.7,254.0 788.7,262.4 777.0,268.0" fill="#9a9a9a" stroke="#111" stroke-width="1" stroke-linejoin="round"/><polyline points="733.1,260.4 733.1,271.9" fill="none" stroke="#111" stroke-width="0.8" /><defs><radialGradient id="vsh" cx="0.5" cy="0.5" r="0.5"><stop offset="0.5" stop-color="#d8d8d8"/><stop offset="1" stop-color="#fff" stop-opacity="0"/></radialGradient></defs><ellipse cx="1021.500" cy="321" rx="65" ry="37" fill="#f1f1f1" stroke="#cfcfcf" stroke-width="1" stroke-dasharray="2 1"/><ellipse cx="1022" cy="319.500" rx="50" ry="23.500" fill="#fff" stroke="#d6d6d6" stroke-width="1" stroke-dasharray="2 1"/><ellipse cx="1024" cy="321" rx="38" ry="18" fill="url(#vsh)"/><polygon points="987,268 1025,254 1057,272 1019,287" fill="#f3f3f3" stroke="#8f8f8f" stroke-width="0.9"/><polygon points="987,268 1019,287 1019,330 990,309" fill="#ececec" stroke="#8f8f8f" stroke-width="0.9"/><polygon points="1019,287 1057,272 1055,313 1019,330" fill="#dedede" stroke="#8f8f8f" stroke-width="0.9"/><text font-family="Liberation Sans, sans-serif" font-size="9" font-weight="bold" fill="#a2a2a2" text-anchor="middle" transform="matrix(0.80 -0.32 0.52 0.31 1021 272.5)">TOP</text><text font-family="Liberation Sans, sans-serif" font-size="10" font-weight="bold" fill="#a2a2a2" text-anchor="middle" transform="matrix(0.62 0.37 0 1 1003.5 301)">LEFT</text><text font-family="Liberation Sans, sans-serif" font-size="11" font-weight="bold" fill="#a2a2a2" text-anchor="middle" transform="matrix(0.80 -0.32 0 1 1038 305)">FRONT</text><text x="973" y="340" font-family="Liberation Sans, sans-serif" font-size="14" font-weight="bold" fill="#d0d0d0" stroke="#bbb" stroke-width=".5" text-anchor="middle" transform="rotate(-25 973 336)">W</text><text x="1064" y="350" font-family="Liberation Sans, sans-serif" font-size="13" font-weight="bold" fill="#d0d0d0" stroke="#bbb" stroke-width=".5" text-anchor="middle" transform="rotate(-20 1064 346)">S</text><text x="1066" y="297" font-family="Liberation Sans, sans-serif" font-size="9" font-weight="bold" fill="#d4d4d4" text-anchor="middle" transform="rotate(15 1066 294)">E</text><text x="983" y="292" font-family="Liberation Sans, sans-serif" font-size="8" font-weight="bold" fill="#dcdcdc" text-anchor="middle">N</text><rect x="1077" y="372.500" width="34" height="115" rx="4" fill="#f2f2f2" stroke="#a8a8a8" stroke-width="1.500"/><circle cx="1104" cy="378" r="3" fill="#fff" stroke="#aaa" stroke-width="1.300"/><path d="M1102.500 376.500l3 3M1105.500 376.500l-3 3" stroke="#aaa" stroke-width="1"/><path d="M1083 395q0-3 3-3h15q4 0 4 4v8q0 10-11 10t-11-10z" fill="#fdfdfd" stroke="#a6a6a6" stroke-width="1.200"/><circle cx="1094" cy="403" r="6.500" fill="none" stroke="#999" stroke-width="1.300"/><path d="M1087 411q7-6 14 0" fill="none" stroke="#999" stroke-width="1.200"/><path d="M1091 422h6l-3 3z" fill="#777"/><path d="M1081 429.500h26" stroke="#b8b8b8"/><rect x="1086.500" y="438.500" width="10" height="10" fill="#a8cf9a" stroke="#7ea874"/><circle cx="1097.500" cy="449" r="3" fill="#fff" stroke="#777" stroke-width="1.200"/><path d="M1099.500 451.500l2.500 3" stroke="#777" stroke-width="1.500"/><path d="M1091 464h6l-3 3z" fill="#777"/><circle cx="1104" cy="481" r="3" fill="#fff" stroke="#aaa" stroke-width="1.300"/><path d="M1102.500 481h3" stroke="#aaa" stroke-width="1"/></svg>
<svg style="position:absolute;left:1058px;top:179px;" width="52" height="14" viewBox="0 0 52 14"><rect x="3" y="6.500" width="10" height="3" fill="#fff" stroke="#333" stroke-width="1"/><rect x="20.500" y="4.500" width="8" height="8" fill="#fff" stroke="#333"/><path d="M22.500 4.500v-2h8v8h-2" fill="none" stroke="#333"/><rect x="23.500" y="7.500" width="2" height="3" fill="none" stroke="#333" stroke-width=".8"/><path d="M40 3.500l8 8M48 3.500l-8 8" stroke="#333" stroke-width="3.200" stroke-linecap="round"/><path d="M40 3.500l8 8M48 3.500l-8 8" stroke="#fff" stroke-width="1.300" stroke-linecap="round"/></svg>
<div style="position:absolute;left:1113px;top:173px;width:17.5px;height:792px;background:#f0f0f0"></div>
<div style="position:absolute;left:225.5px;top:171px;width:905px;height:2px;background:#6a6a6a"></div>
<div style="position:absolute;left:1115.5px;top:561px;width:13px;height:15px;background:#cdcdcd"></div>
<svg style="position:absolute;left:1116px;top:178px;" width="10" height="8" viewBox="0 0 10 8"><path d="M1 6l4-4 4 4" fill="none" stroke="#444" stroke-width="1.800"/></svg>
<svg style="position:absolute;left:1116px;top:952px;" width="10" height="8" viewBox="0 0 10 8"><path d="M1 2l4 4 4-4" fill="none" stroke="#444" stroke-width="1.800"/></svg>
<span class="t" style="left:239.0px;top:966.6px;letter-spacing:-0.09px;color:#111;font-size:11.5px;line-height:13.5px;">1/8&quot; = 1&#x27;-0&quot;</span>
<svg style="position:absolute;left:0;top:0" width="1134" height="1010" viewBox="0 0 1134 1010"><g transform="translate(306 965)"><rect x="0.500" y="0.500" width="15" height="11.500" fill="#fff" stroke="#333" stroke-width="1.200"/><path d="M1 1h4v3h-4zM9 1h4v3h-4zM5 4h4v3.500h-4zM12 4h3.500v3.500h-3.500zM1 7.500h4v4h-4zM9 7.500h3.500v4h-3.500z" fill="#555"/></g><g transform="translate(327.5 964.5)"><path d="M1 6.500L5 1.500h10v7l-4 5.500h-10z" fill="#cfe2f6" stroke="#1b5fae" stroke-width="1.100" stroke-linejoin="round"/><path d="M1 6.500h10l4-5M11 6.500v7.500" fill="none" stroke="#1b5fae" stroke-width="1"/></g><g transform="translate(347.5 963.5)"><circle cx="6.500" cy="7" r="3.500" fill="#ffd84a" stroke="#e09a10" stroke-width=".9"/><path d="M6.500 0.500v2M6.500 11.500v2M0 7h2M11 7h2M2 2.500l1.400 1.400M11 2.500l-1.400 1.400M2 11.500l1.400-1.400" stroke="#e09a10" stroke-width="1"/><g transform="translate(9 9)"><path d="M0 0l5 5M5 0L0 5" stroke="#d8201c" stroke-width="1.800"/></g></g><g transform="translate(370 964)"><circle cx="6" cy="5.500" r="4.500" fill="#fff" stroke="#2a7ad0" stroke-width="1.200"/><path d="M1 13h9" stroke="#555" stroke-width="1.400"/><g transform="translate(9 8)"><path d="M0 0l5 5M5 0L0 5" stroke="#d8201c" stroke-width="1.800"/></g></g><g transform="translate(389 964.5)"><path d="M1 3l3 3.500c0 3 2 4.500 5 4.500s4-1.500 4-4.500V4H5z" fill="#f4f4f4" stroke="#666" stroke-width="1"/><path d="M6 4V2.500h5V4" fill="none" stroke="#666"/><circle cx="12.500" cy="8.500" r="2.600" fill="#fff" stroke="#2a7ad0" stroke-width="1.100"/><path d="M12.500 11v2.500" stroke="#2a7ad0" stroke-width="1.500"/></g><g transform="translate(410.5 964.5)"><path d="M0 8.500h3V3.500h12M5 13V6.500h8" fill="none" stroke="#2a5a9a" stroke-width="1.200"/><path d="M6 8h3v3" fill="none" stroke="#d8201c" stroke-dasharray="1 1"/><g transform="translate(9 7.5)"><path d="M0 0l5 5M5 0L0 5" stroke="#d8201c" stroke-width="1.800"/></g></g><g transform="translate(431.5 964.5)"><path d="M0 8.500h3V3.500h10M5 13V6.500h6" fill="none" stroke="#2a5a9a" stroke-width="1.200"/><path d="M6 8h3v3" fill="none" stroke="#d8201c" stroke-dasharray="1 1"/><circle cx="12.500" cy="7.500" r="2.600" fill="#fff" stroke="#2a7ad0" stroke-width="1.100"/><path d="M12.500 10v3" stroke="#2a7ad0" stroke-width="1.500"/></g><g transform="translate(452 963.5)"><path d="M1 7.500L7 1.500l7 5v8H3.500V9" fill="#f4f4f4" stroke="#333" stroke-width="1.200" stroke-linejoin="round"/><path d="M4.500 14.500V9l3-2" fill="none" stroke="#333"/><rect x="8" y="9.500" width="7" height="5" fill="#fff" stroke="#2a8a6a" stroke-width="1.200"/><path d="M9.500 9.500V7.500a2 2 0 014 0" fill="none" stroke="#2a8a6a" stroke-width="1.100"/></g><g transform="translate(473.5 966)"><path d="M0.500 3.500c2-2 3.500-1 5 2.500" fill="none" stroke="#333" stroke-width="1.200"/><ellipse cx="7" cy="8" rx="2.500" ry="2" fill="none" stroke="#333" stroke-width="1.100" transform="rotate(-20 7 8)"/><ellipse cx="12.500" cy="5.500" rx="2.800" ry="2.300" fill="none" stroke="#333" stroke-width="1.100" transform="rotate(-20 12.500 5.500)"/><path d="M9 6.500l1 -.5M11 1c2-.5 3.500.5 4 2.500" fill="none" stroke="#333" stroke-width="1.100"/></g><g transform="translate(498.5 966.5)"><circle cx="3.500" cy="3.500" r="2.800" fill="#fff" stroke="#2a7ad0" stroke-width="1.200"/><path d="M3.500 6.500v3" stroke="#2a7ad0" stroke-width="1.800"/></g><g transform="translate(516 965)"><rect x="1" y="2" width="11" height="9.500" fill="none" stroke="#222" stroke-width="1.200" stroke-dasharray="3 1.500"/><rect x="8" y="6" width="6.500" height="5.500" fill="#fff" stroke="#222"/><circle cx="11.200" cy="8.800" r="1.300" fill="none" stroke="#222" stroke-width=".9"/></g><g transform="translate(536 964)"><path d="M1 7.500L8 1.500l6.500 5" fill="none" stroke="#333" stroke-width="1.200"/><path d="M2.500 7v7.500M5.500 5v9.500M8.500 4v10.500" stroke="#c8281c" stroke-width="1.200"/><path d="M1.500 9.500h9" stroke="#555"/><circle cx="12.500" cy="7" r="3" fill="#ffc83a" stroke="#e09a10" stroke-width=".8"/><path d="M12.500 10.500v3" stroke="#999" stroke-width="1.500"/></g><g transform="translate(558 965.5)"><path d="M1 5l4-3h8v7l-3.500 3.500h-8.500z" fill="#f4f4f4" stroke="#555" stroke-width="1.100"/><path d="M1 5h8.500l3.500-3M9.500 5v7.500M3.500 7v3.500h3.500V7z" fill="none" stroke="#555" stroke-width="1"/></g><g transform="translate(578 964)"><path d="M1 0.500v6M15 0.500v6M1 3h14" fill="none" stroke="#333" stroke-width="1.100"/><path d="M1 8v5.500M2 11h6" fill="none" stroke="#333" stroke-dasharray="1.500 1.500"/><rect x="9" y="8.500" width="6.500" height="5" fill="#ddd" stroke="#333"/><path d="M10.500 8.500V7a1.800 1.800 0 013.500 0v1.500" fill="none" stroke="#333"/></g></svg>
<div style="position:absolute;left:846px;top:966px;width:16px;height:15px;background:#cdcdcd"></div>
<svg style="position:absolute;left:602.5px;top:968px;" width="8" height="10" viewBox="0 0 8 10"><path d="M6 1L2 5l4 4" fill="none" stroke="#444" stroke-width="1.800"/></svg>
<svg style="position:absolute;left:1100px;top:968px;" width="8" height="10" viewBox="0 0 8 10"><path d="M2 1l4 4-4 4" fill="none" stroke="#444" stroke-width="1.800"/></svg>
<svg style="position:absolute;left:1116px;top:968px;" width="12" height="12" viewBox="0 0 12 12"><g fill="#bbb"><rect x="8" y="2" width="2" height="2"/><rect x="5" y="5" width="2" height="2"/><rect x="8" y="5" width="2" height="2"/><rect x="2" y="8" width="2" height="2"/><rect x="5" y="8" width="2" height="2"/><rect x="8" y="8" width="2" height="2"/></g></svg>
<div style="position:absolute;left:1px;top:983px;width:1130px;height:1px;background:#8a8a8a"></div>
<div style="position:absolute;left:1px;top:984px;width:1130px;height:23px;background:linear-gradient(#f4f4f4,#e4e4e4 30%,#c8c8c8);border-top:1px solid #fff;box-sizing:border-box"></div>
<span class="t" style="left:4.0px;top:989.3px;letter-spacing:-0.26px;color:#111;">Click to select, TAB for alternates, CTRL adds, SHIFT unselects.</span>
<div style="position:absolute;left:516px;top:986px;width:206px;height:20px;background:#fff;border:1px solid #d4d4d4;box-sizing:border-box"></div>
<svg style="position:absolute;left:707px;top:992px;" width="11" height="8" viewBox="0 0 11 8"><path d="M1 1.500l4.500 4.500L10 1.500" fill="none" stroke="#aaa" stroke-width="1.100"/></svg>
<svg style="position:absolute;left:492px;top:987px;" width="20" height="18" viewBox="0 0 20 18"><path d="M3 16v-8l4-3 3 2v9z M10 16v-11l3-2 3 2v11z" fill="#c9c9c9" stroke="#999" stroke-width="1"/><circle cx="8" cy="5" r="2.500" fill="#ddd" stroke="#999"/></svg>
<div style="position:absolute;left:726px;top:986px;width:71px;height:20px;background:linear-gradient(#ececec,#d6d6d6)"></div>
<svg style="position:absolute;left:730px;top:988px;" width="18" height="17" viewBox="0 0 18 17"><path d="M3 15l5-8-3-4h9l-1 5-4 1-1 6z" fill="#b8b8b8" stroke="#888" stroke-width="1"/></svg>
<span class="t" style="left:750.0px;top:989.3px;letter-spacing:-0.50px;color:#111;">:0</span>
<svg style="position:absolute;left:781px;top:987px;" width="20" height="18" viewBox="0 0 20 18"><rect x="1.500" y="1.500" width="17" height="15" fill="#fff" stroke="#333" stroke-width="1.300"/><path d="M2 4h16" stroke="#333" stroke-width="2"/><path d="M5 8h2M5 11.500h2M9 8h7M9 11.500h7" stroke="#333" stroke-width="1.400"/></svg>
<svg style="position:absolute;left:810px;top:987px;" width="18" height="18" viewBox="0 0 18 18"><rect x="1" y="1" width="15" height="15" fill="#a8a8a8"/><path d="M4 12l5-5M9 7h-3M9 7v3M11 4v10h-6" fill="none" stroke="#e8e8e8" stroke-width="1.200"/></svg>
<div style="position:absolute;left:832px;top:986px;width:206px;height:20px;background:#fff;border:1px solid #d4d4d4;box-sizing:border-box"></div>
<span class="t" style="left:836.0px;top:989.3px;letter-spacing:-0.00px;color:#6a6a6a;">Main Model</span>
<svg style="position:absolute;left:1023px;top:992px;" width="11" height="8" viewBox="0 0 11 8"><path d="M1 1.500l4.500 4.500L10 1.500" fill="none" stroke="#aaa" stroke-width="1.100"/></svg>
<svg style="position:absolute;left:1117px;top:993px;" width="12" height="12" viewBox="0 0 12 12"><g fill="#b4b4b4"><rect x="8" y="2" width="2" height="2"/><rect x="5" y="5" width="2" height="2"/><rect x="8" y="5" width="2" height="2"/><rect x="2" y="8" width="2" height="2"/><rect x="5" y="8" width="2" height="2"/><rect x="8" y="8" width="2" height="2"/></g></svg>
</div></div>
</body></html>
